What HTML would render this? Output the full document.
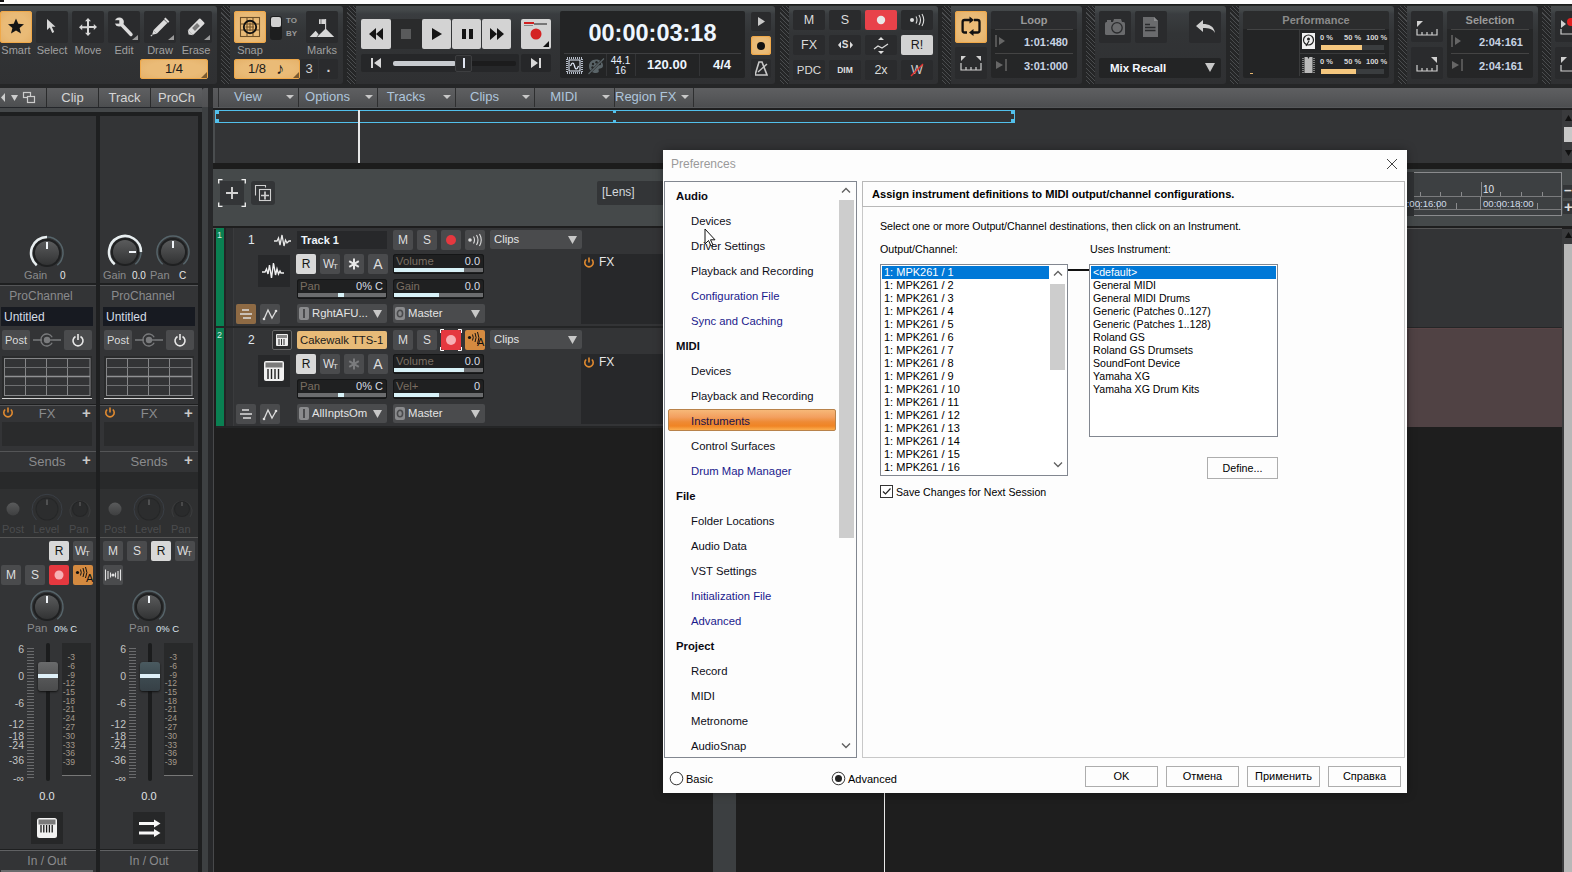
<!DOCTYPE html><html><head><meta charset="utf-8"><style>*{margin:0;padding:0;box-sizing:border-box}html,body{width:1572px;height:872px;overflow:hidden;background:#1e1e1e;font-family:"Liberation Sans",sans-serif}.a{position:absolute}.t{white-space:nowrap}</style></head><body>
<div class="a" style="left:0px;top:0px;width:1572px;height:4px;background:#fcfcfc"></div>
<div class="a" style="left:0px;top:0px;width:4px;height:2px;background:#111"></div>
<div class="a" style="left:0px;top:4px;width:1572px;height:1px;background:#1a1c1b"></div>
<div class="a" style="left:0px;top:5px;width:1572px;height:1px;background:#262827"></div>
<div class="a" style="left:0px;top:6px;width:1572px;height:82px;background:#252627"></div>
<div class="a" style="left:-4px;top:6px;width:221px;height:78px;background:linear-gradient(#474b4c 0px,#44484a 4px,#3a3d40 8px,#323436 28px,#2f3032 78px);border-radius:3px;"></div>
<div class="a" style="left:0px;top:11px;width:32px;height:32px;background:radial-gradient(ellipse at center,#eabb77 55%,#e4b068 100%);border-radius:3px;box-shadow:inset 0 0 0 1px #f0a848;"></div>
<div class="a t" style="left:-4px;top:44px;width:40px;text-align:center;color:#a0a0a0;font-size:11px;line-height:13px">Smart</div>
<div class="a" style="left:36px;top:11px;width:32px;height:32px;background:#2a2b2d;border-radius:2px;"></div>
<div class="a t" style="left:32px;top:44px;width:40px;text-align:center;color:#a0a0a0;font-size:11px;line-height:13px">Select</div>
<div class="a" style="left:72px;top:11px;width:32px;height:32px;background:#2a2b2d;border-radius:2px;"></div>
<div class="a t" style="left:68px;top:44px;width:40px;text-align:center;color:#a0a0a0;font-size:11px;line-height:13px">Move</div>
<div class="a" style="left:108px;top:11px;width:32px;height:32px;background:#2a2b2d;border-radius:2px;"></div>
<div class="a t" style="left:104px;top:44px;width:40px;text-align:center;color:#a0a0a0;font-size:11px;line-height:13px">Edit</div>
<div class="a" style="left:144px;top:11px;width:32px;height:32px;background:#2a2b2d;border-radius:2px;"></div>
<div class="a t" style="left:140px;top:44px;width:40px;text-align:center;color:#a0a0a0;font-size:11px;line-height:13px">Draw</div>
<div class="a" style="left:180px;top:11px;width:32px;height:32px;background:#2a2b2d;border-radius:2px;"></div>
<div class="a t" style="left:176px;top:44px;width:40px;text-align:center;color:#a0a0a0;font-size:11px;line-height:13px">Erase</div>
<svg class="a" style="left:7px;top:17px;" width="18" height="18" viewBox="0 0 18 18"><path d="M9 1.5l2.3 5.3 5.7.4-4.4 3.7 1.4 5.6L9 13.5l-5 3 1.4-5.6L1 7.2l5.7-.4z" fill="#151515"/></svg>
<svg class="a" style="left:44px;top:18px;" width="14" height="17" viewBox="0 0 14 17"><path d="M3 1v11l2.8-2.6 2.4 5.6 2-0.9-2.4-5.4H11.5z" fill="#d8d8d8"/></svg>
<svg class="a" style="left:78px;top:17px;" width="20" height="19" viewBox="0 0 20 19"><path d="M10 1l3 3.2h-2v4.8h4.8v-2l3.2 3-3.2 3v-2H11v4.8h2l-3 3.2-3-3.2h2V11.2H4.2v2L1 10.2l3.2-3v2H9V4.2H7z" fill="#d8d8d8"/></svg>
<svg class="a" style="left:108px;top:11px;" width="32" height="32" viewBox="0 0 32 32"><path d="M13.5 13.5L23 23.5" stroke="#dcdcdc" stroke-width="3.4" stroke-linecap="round"/><circle cx="11.3" cy="11" r="4.6" fill="#dcdcdc"/><path d="M5 9.2h6.3v3.4H5z" fill="#2a2b2d"/></svg>
<svg class="a" style="left:144px;top:11px;" width="32" height="32" viewBox="0 0 32 32"><g transform="rotate(-45 16 16)"><rect x="9" y="13.6" width="15" height="4.8" fill="#dcdcdc"/><path d="M9 13.6L5 16l4 2.4z" fill="#dcdcdc"/><path d="M3 16h2" stroke="#dcdcdc" stroke-width="1"/><path d="M24.5 13.2h2v5.6h-2z" fill="#dcdcdc"/></g></svg>
<svg class="a" style="left:180px;top:11px;" width="32" height="32" viewBox="0 0 32 32"><g transform="rotate(-45 16 16)"><rect x="8" y="12.4" width="17" height="7.2" rx="1" fill="#dcdcdc"/><rect x="12.5" y="14" width="7" height="4" fill="#7a7a7a"/><path d="M8 12.4L5.5 16 8 19.6z" fill="#dcdcdc"/></g></svg>
<svg class="a" style="left:132px;top:35px;" width="6" height="5" viewBox="0 0 6 5"><path d="M6 0V5H0Z" fill="#9a9a9a"/></svg>
<svg class="a" style="left:168px;top:35px;" width="6" height="5" viewBox="0 0 6 5"><path d="M6 0V5H0Z" fill="#9a9a9a"/></svg>
<svg class="a" style="left:204px;top:35px;" width="6" height="5" viewBox="0 0 6 5"><path d="M6 0V5H0Z" fill="#9a9a9a"/></svg>
<div class="a" style="left:140px;top:59px;width:68px;height:20px;background:radial-gradient(ellipse at center,#eabb77 55%,#e4b068 100%);border-radius:3px;box-shadow:inset 0 0 0 1px #f0a848;"></div>
<div class="a t" style="left:140px;top:62px;width:68px;text-align:center;color:#1a1a1a;font-size:13px;line-height:14px">1/4</div>
<svg class="a" style="left:201px;top:72px;" width="6" height="6" viewBox="0 0 6 6"><path d="M6 0V6H0Z" fill="#7a5a30"/></svg>
<div class="a" style="left:221px;top:6px;width:122px;height:78px;background:linear-gradient(#474b4c 0px,#44484a 4px,#3a3d40 8px,#323436 28px,#2f3032 78px);border-radius:3px;"></div>
<div class="a" style="left:221px;top:6px;width:9px;height:78px;background:repeating-linear-gradient(45deg,#252627 0 2.2px,#4a4c4e 2.2px 3.0px)"></div>
<div class="a" style="left:234px;top:11px;width:32px;height:32px;background:radial-gradient(ellipse at center,#eabb77 55%,#e4b068 100%);border-radius:3px;box-shadow:inset 0 0 0 1px #f0a848;"></div>
<svg class="a" style="left:239px;top:16px;" width="22" height="22" viewBox="0 0 22 22"><g stroke="#6e5028" stroke-width="1.1" fill="none"><rect x="1.5" y="1.5" width="19" height="19"/><path d="M1.5 8H20.5M1.5 14H20.5M8 1.5V20.5M14 1.5V20.5"/><path d="M6.5 11H15M11 6.5V15" /></g><circle cx="11" cy="11" r="6.2" stroke="#111" stroke-width="1.9" fill="none"/></svg>
<div class="a" style="left:270px;top:16px;width:12px;height:24px;background:#1d1e1f;border-radius:3px"></div>
<div class="a" style="left:271px;top:17px;width:10px;height:10px;background:#d0d0d0;border-radius:2px"></div>
<div class="a t" style="left:286px;top:16px;color:#9a9a9a;font-size:8px;line-height:9px;font-weight:bold">TO</div>
<div class="a t" style="left:286px;top:29px;color:#9a9a9a;font-size:8px;line-height:9px;font-weight:bold">BY</div>
<div class="a" style="left:306px;top:11px;width:32px;height:32px;background:#2a2b2d;border-radius:2px;"></div>
<svg class="a" style="left:306px;top:11px;" width="32" height="32" viewBox="0 0 32 32"><path d="M3.7 26L9.6 19.7 12.6 23.2 10.6 26z" fill="#d8d8d8"/><path d="M11 26L19.6 17.6 28.2 26z" fill="#d8d8d8"/><path d="M19.6 8v10" stroke="#d8d8d8" stroke-width="1.1"/><path d="M13 8.2h6.1v4.8H13z" fill="#d8d8d8"/><path d="M15 8.2v4.8" stroke="#2a2b2d" stroke-width="0.6"/></svg>
<div class="a t" style="left:230px;top:44px;width:40px;text-align:center;color:#a0a0a0;font-size:11px;line-height:13px">Snap</div>
<div class="a t" style="left:302px;top:44px;width:40px;text-align:center;color:#a0a0a0;font-size:11px;line-height:13px">Marks</div>
<div class="a" style="left:234px;top:59px;width:66px;height:20px;background:radial-gradient(ellipse at center,#eabb77 55%,#e4b068 100%);border-radius:3px;box-shadow:inset 0 0 0 1px #f0a848;"></div>
<div class="a t" style="left:234px;top:62px;width:46px;text-align:center;color:#1a1a1a;font-size:13px;line-height:14px">1/8</div>
<div class="a t" style="left:276px;top:60px;color:#1a1a1a;font-size:16px;line-height:17px">&#9834;</div>
<svg class="a" style="left:293px;top:72px;" width="6" height="6" viewBox="0 0 6 6"><path d="M6 0V6H0Z" fill="#7a5a30"/></svg>
<div class="a" style="left:300px;top:59px;width:18px;height:20px;background:#2a2b2d;border-radius:2px;"></div>
<div class="a" style="left:319px;top:59px;width:19px;height:20px;background:#2a2b2d;border-radius:2px;"></div>
<div class="a t" style="left:300px;top:62px;width:18px;text-align:center;color:#d0d0d0;font-size:13px;line-height:14px">3</div>
<div class="a t" style="left:319px;top:60px;width:19px;text-align:center;color:#d0d0d0;font-size:14px;line-height:15px;font-weight:bold">.</div>
<div class="a" style="left:347px;top:6px;width:428px;height:78px;background:linear-gradient(#474b4c 0px,#44484a 4px,#3a3d40 8px,#323436 28px,#2f3032 78px);border-radius:3px;"></div>
<div class="a" style="left:347px;top:6px;width:9px;height:78px;background:repeating-linear-gradient(45deg,#252627 0 2.2px,#4a4c4e 2.2px 3.0px)"></div>
<div class="a" style="left:361px;top:19px;width:30px;height:30px;background:#d3d3d3;border-radius:2px;"></div>
<div class="a" style="left:391px;top:19px;width:31px;height:30px;background:#2a2b2c"></div>
<div class="a" style="left:422px;top:19px;width:29px;height:30px;background:#d3d3d3;border-radius:2px;"></div>
<div class="a" style="left:452px;top:19px;width:29px;height:30px;background:#d3d3d3;border-radius:2px;"></div>
<div class="a" style="left:482px;top:19px;width:29px;height:30px;background:#d3d3d3;border-radius:2px;"></div>
<svg class="a" style="left:368px;top:26px;" width="16" height="16" viewBox="0 0 16 16"><path d="M1 8l7-6v12zM8 8l7-6v12z" fill="#151515"/></svg>
<div class="a" style="left:401px;top:29px;width:10px;height:10px;background:#595a5b"></div>
<svg class="a" style="left:430px;top:26px;" width="14" height="16" viewBox="0 0 14 16"><path d="M2 2l10 6-10 6z" fill="#151515"/></svg>
<div class="a" style="left:462px;top:29px;width:4px;height:10px;background:#151515"></div>
<div class="a" style="left:469px;top:29px;width:4px;height:10px;background:#151515"></div>
<svg class="a" style="left:489px;top:26px;" width="16" height="16" viewBox="0 0 16 16"><path d="M1 2l7 6-7 6zM8 2l7 6-7 6z" fill="#151515"/></svg>
<div class="a" style="left:521px;top:19px;width:30px;height:30px;background:#d3d3d3;border-radius:2px;"></div>
<div class="a" style="left:524px;top:22px;width:10px;height:2px;background:#d02020"></div>
<div class="a" style="left:534px;top:23px;width:13px;height:1.5px;background:#777"></div>
<svg class="a" style="left:524px;top:24px;" width="10" height="3" viewBox="0 0 10 3"><path d="M0 1l1 1 1-1 1 1 1-1 1 1 1-1 1 1 1-1 1 1" stroke="#666" stroke-width="0.7" fill="none"/></svg>
<svg class="a" style="left:529px;top:27px;" width="14" height="14" viewBox="0 0 14 14"><circle cx="7" cy="7" r="5.5" fill="#d42222"/></svg>
<svg class="a" style="left:543px;top:41px;" width="6" height="6" viewBox="0 0 6 6"><path d="M6 0V6H0Z" fill="#111"/></svg>
<div class="a" style="left:361px;top:54px;width:158px;height:18px;background:#262729;border-radius:2px"></div>
<svg class="a" style="left:370px;top:57px;" width="12" height="12" viewBox="0 0 12 12"><path d="M1 1h2v10H1zM4 6l7-5v10z" fill="#d8d8d8"/></svg>
<div class="a" style="left:393px;top:61px;width:123px;height:5px;background:#1c1c1d;border-radius:2px"></div>
<div class="a" style="left:393px;top:61px;width:63px;height:5px;background:#c8cbd0;border-radius:2px"></div>
<div class="a" style="left:455px;top:55px;width:17px;height:17px;background:#2a2b2d;border:1px solid #3d3e40;border-radius:2px"></div>
<div class="a" style="left:463px;top:58px;width:2px;height:10px;background:#e0e4f0"></div>
<div class="a" style="left:521px;top:54px;width:30px;height:18px;background:#262729;border-radius:2px"></div>
<svg class="a" style="left:530px;top:57px;" width="12" height="12" viewBox="0 0 12 12"><path d="M11 1H9v10h2zM8 6L1 1v10z" fill="#d8d8d8"/></svg>
<div class="a" style="left:560px;top:11px;width:185px;height:67px;background:#232425;border-radius:2px"></div>
<div class="a t" style="left:560px;top:20px;width:185px;text-align:center;color:#eef6ff;font-size:23.5px;line-height:27px;font-weight:bold">00:00:03:18</div>
<div class="a" style="left:564px;top:53px;width:177px;height:1px;background:#3e3f41"></div>
<div class="a" style="left:606px;top:54px;width:1px;height:22px;background:#333436"></div>
<div class="a" style="left:635px;top:54px;width:1px;height:22px;background:#333436"></div>
<div class="a" style="left:699px;top:54px;width:1px;height:22px;background:#333436"></div>
<svg class="a" style="left:566px;top:57px;" width="17" height="17" viewBox="0 0 17 17"><rect x="1" y="1" width="15" height="15" fill="none" stroke="#e8f0ff" stroke-width="1.5" stroke-dasharray="1 1"/><rect x="3" y="3" width="11" height="11" fill="none" stroke="#e8f0ff" stroke-width="1"/><path d="M4.5 9c1.5-4 3-4 4 0s2.5 4 4 0" stroke="#e8f0ff" fill="none" stroke-width="1.2"/></svg>
<svg class="a" style="left:587px;top:57px;" width="18" height="18" viewBox="0 0 18 18"><path d="M9 2.5c4 0 7 2.6 7 6 0 2.2-1.6 3-3 3-1.2 0-1.8.8-1.3 2 .6 1.4-.6 2.5-2.7 2.5-4 0-7-2.9-7-6.8S5 2.5 9 2.5z" fill="#5a6468"/><circle cx="6" cy="7" r="1.2" fill="#232425"/><circle cx="9.5" cy="5.3" r="1.2" fill="#232425"/><circle cx="12.8" cy="7" r="1.2" fill="#232425"/><circle cx="5.5" cy="10.5" r="1.2" fill="#232425"/><path d="M1.5 17L17 1.5" stroke="#232425" stroke-width="2.2"/><path d="M1.5 17L17 1.5" stroke="#5a6468" stroke-width="1.2"/></svg>
<div class="a t" style="left:606px;top:56px;width:29px;text-align:center;color:#e8f0ff;font-size:10px;line-height:10px">44.1</div>
<div class="a t" style="left:606px;top:66px;width:29px;text-align:center;color:#e8f0ff;font-size:10px;line-height:10px">16</div>
<div class="a t" style="left:635px;top:58px;width:64px;text-align:center;color:#eef6ff;font-size:13px;line-height:14px;font-weight:bold">120.00</div>
<div class="a t" style="left:699px;top:58px;width:46px;text-align:center;color:#eef6ff;font-size:13px;line-height:14px;font-weight:bold">4/4</div>
<div class="a" style="left:751px;top:12px;width:20px;height:19px;background:#2a2b2d;border-radius:2px;"></div>
<div class="a" style="left:751px;top:36px;width:20px;height:19px;background:radial-gradient(ellipse at center,#eabb77 55%,#e4b068 100%);border-radius:3px;box-shadow:inset 0 0 0 1px #f0a848;"></div>
<div class="a" style="left:751px;top:59px;width:20px;height:19px;background:#2a2b2d;border-radius:2px;"></div>
<svg class="a" style="left:757px;top:17px;" width="8" height="9" viewBox="0 0 8 9"><path d="M1 0l7 4.5L1 9z" fill="#c8c8c8"/></svg>
<svg class="a" style="left:756px;top:41px;" width="10" height="10" viewBox="0 0 10 10"><circle cx="5" cy="5" r="4" fill="#111"/></svg>
<svg class="a" style="left:755px;top:61px;" width="13" height="15" viewBox="0 0 13 15"><path d="M4 1h3l5 13H0z" fill="none" stroke="#c8c8c8" stroke-width="1.6"/><path d="M3 11L12 3" stroke="#c8c8c8" stroke-width="1.4"/></svg>
<div class="a" style="left:780px;top:6px;width:158px;height:78px;background:linear-gradient(#474b4c 0px,#44484a 4px,#3a3d40 8px,#323436 28px,#2f3032 78px);border-radius:3px;"></div>
<div class="a" style="left:780px;top:6px;width:9px;height:78px;background:repeating-linear-gradient(45deg,#252627 0 2.2px,#4a4c4e 2.2px 3.0px)"></div>
<div class="a" style="left:793px;top:10px;width:32px;height:20px;background:#2a2b2d;border-radius:2px;"></div>
<div class="a t" style="left:793px;top:13px;width:32px;text-align:center;color:#dcdcdc;font-size:12.5px;line-height:14px">M</div>
<div class="a" style="left:829px;top:10px;width:32px;height:20px;background:#2a2b2d;border-radius:2px;"></div>
<div class="a t" style="left:829px;top:13px;width:32px;text-align:center;color:#dcdcdc;font-size:12.5px;line-height:14px">S</div>
<div class="a" style="left:865px;top:10px;width:32px;height:20px;background:#e8424a;border-radius:2px"></div>
<svg class="a" style="left:876px;top:15px;" width="10" height="10" viewBox="0 0 10 10"><circle cx="5" cy="5" r="4.2" fill="#e8e8e8"/></svg>
<div class="a" style="left:901px;top:10px;width:32px;height:20px;background:#2a2b2d;border-radius:2px;"></div>
<svg class="a" style="left:909px;top:13px;" width="16" height="14" viewBox="0 0 16 14"><circle cx="3" cy="7" r="2" fill="#ddd"/><path d="M7 3.5q2 3.5 0 7M10 2q3 5 0 10M13 1q3.5 6 0 12" stroke="#ddd" stroke-width="1.1" fill="none"/></svg>
<div class="a" style="left:793px;top:35px;width:32px;height:20px;background:#2a2b2d;border-radius:2px;"></div>
<div class="a t" style="left:793px;top:38px;width:32px;text-align:center;color:#dcdcdc;font-size:12.5px;line-height:14px">FX</div>
<div class="a" style="left:829px;top:35px;width:32px;height:20px;background:#2a2b2d;border-radius:2px;"></div>
<svg class="a" style="left:838px;top:40px;" width="15" height="10" viewBox="0 0 15 10"><path d="M0 5l3-3.5v7zM15 5l-3-3.5v7z" fill="#ddd"/></svg>
<div class="a t" style="left:837px;top:39px;width:16px;text-align:center;color:#ddd;font-size:10px;line-height:12px;font-weight:bold">S</div>
<div class="a" style="left:865px;top:35px;width:32px;height:20px;background:#2a2b2d;border-radius:2px;"></div>
<svg class="a" style="left:873px;top:37px;" width="16" height="17" viewBox="0 0 16 17"><path d="M8 0l3 3H5zM8 17l3-3H5z" fill="#ddd"/><path d="M1 12l4-3 4 2 6-4" stroke="#ddd" stroke-width="1.2" fill="none"/></svg>
<div class="a" style="left:901px;top:35px;width:32px;height:20px;background:#d3d3d3;border-radius:2px;"></div>
<div class="a t" style="left:901px;top:38px;width:32px;text-align:center;color:#1a1a1a;font-size:12.5px;line-height:14px">R!</div>
<div class="a" style="left:793px;top:60px;width:32px;height:20px;background:#2a2b2d;border-radius:2px;"></div>
<div class="a t" style="left:793px;top:63px;width:32px;text-align:center;color:#dcdcdc;font-size:11.5px;line-height:14px">PDC</div>
<div class="a" style="left:829px;top:60px;width:32px;height:20px;background:#2a2b2d;border-radius:2px;"></div>
<div class="a t" style="left:829px;top:64px;width:32px;text-align:center;color:#ddd;font-size:8.5px;line-height:12px;font-weight:bold">DIM</div>
<div class="a" style="left:865px;top:60px;width:32px;height:20px;background:#2a2b2d;border-radius:2px;"></div>
<div class="a t" style="left:865px;top:63px;width:32px;text-align:center;color:#dcdcdc;font-size:12.5px;line-height:14px">2x</div>
<div class="a" style="left:901px;top:60px;width:32px;height:20px;background:#2a2b2d;border-radius:2px;"></div>
<div class="a t" style="left:901px;top:63px;width:32px;text-align:center;color:#cfcfcf;font-size:12.5px;line-height:14px">W</div>
<svg class="a" style="left:910px;top:63px;" width="14" height="14" viewBox="0 0 14 14"><path d="M1 13L13 1" stroke="#e03030" stroke-width="1.5"/></svg>
<div class="a" style="left:942px;top:6px;width:140px;height:78px;background:linear-gradient(#474b4c 0px,#44484a 4px,#3a3d40 8px,#323436 28px,#2f3032 78px);border-radius:3px;"></div>
<div class="a" style="left:942px;top:6px;width:9px;height:78px;background:repeating-linear-gradient(45deg,#252627 0 2.2px,#4a4c4e 2.2px 3.0px)"></div>
<div class="a" style="left:955px;top:11px;width:32px;height:32px;background:radial-gradient(ellipse at center,#eabb77 55%,#e4b068 100%);border-radius:3px;box-shadow:inset 0 0 0 1px #f0a848;"></div>
<svg class="a" style="left:955px;top:11px;" width="32" height="32" viewBox="0 0 32 32"><path d="M12 21.5H9.6q-2 0-2-2V11q0-2 2-2H15" stroke="#111" stroke-width="2.3" fill="none"/><path d="M14.5 5.5L19 9l-4.5 3.5z" fill="#111"/><path d="M19 9h3.5q2 0 2 2v8.5q0 2-2 2H18" stroke="#111" stroke-width="2.3" fill="none"/><path d="M18.5 18L14 21.5l4.5 3.5z" fill="#111"/></svg>
<div class="a" style="left:955px;top:47px;width:32px;height:32px;background:#2a2b2d;border-radius:2px;"></div>
<svg class="a" style="left:960px;top:55px;" width="22" height="16" viewBox="0 0 22 16"><path d="M1 1h5L1 6z M21 1h-5l5 5z" fill="#d0d0d0"/><path d="M1 8v7h20V8M6 12v3M11 12v3M16 12v3" stroke="#d0d0d0" stroke-width="1.2" fill="none"/></svg>
<div class="a" style="left:991px;top:11px;width:86px;height:67px;background:linear-gradient(#2b2c2e 0,#2b2c2e 18px,#252627 18px);border-radius:2px"></div>
<div class="a t" style="left:991px;top:13px;width:86px;text-align:center;color:#9a9a9a;font-size:11px;line-height:14px;font-weight:bold">Loop</div>
<div class="a" style="left:995px;top:29px;width:78px;height:1px;background:#444"></div>
<div class="a" style="left:995px;top:53px;width:78px;height:1px;background:#444"></div>
<svg class="a" style="left:995px;top:35px;" width="12" height="12" viewBox="0 0 12 12"><path d="M1 0v12" stroke="#666" stroke-width="1.5"/><path d="M4 2l6 4-6 4z" fill="#666"/></svg>
<svg class="a" style="left:995px;top:59px;" width="12" height="12" viewBox="0 0 12 12"><path d="M11 0v12" stroke="#666" stroke-width="1.5"/><path d="M1 2l7 4-7 4z" fill="#666"/></svg>
<div class="a t" style="left:1006px;top:35px;width:62px;text-align:right;color:#c8d4e4;font-size:11px;line-height:14px;font-weight:bold">1:01:480</div>
<div class="a t" style="left:1006px;top:59px;width:62px;text-align:right;color:#c8d4e4;font-size:11px;line-height:14px;font-weight:bold">3:01:000</div>
<div class="a" style="left:1086px;top:6px;width:140px;height:78px;background:linear-gradient(#474b4c 0px,#44484a 4px,#3a3d40 8px,#323436 28px,#2f3032 78px);border-radius:3px;"></div>
<div class="a" style="left:1086px;top:6px;width:9px;height:78px;background:repeating-linear-gradient(45deg,#252627 0 2.2px,#4a4c4e 2.2px 3.0px)"></div>
<div class="a" style="left:1099px;top:11px;width:32px;height:32px;background:#2a2b2d;border-radius:2px;"></div>
<div class="a" style="left:1135px;top:11px;width:32px;height:32px;background:#2a2b2d;border-radius:2px;"></div>
<div class="a" style="left:1189px;top:11px;width:32px;height:32px;background:#2a2b2d;border-radius:2px;"></div>
<svg class="a" style="left:1104px;top:18px;" width="22" height="18" viewBox="0 0 22 18"><rect x="1" y="4" width="20" height="13" rx="1.5" fill="#6a6b6d"/><path d="M9 4l1-3h7l1 3z" fill="#6a6b6d"/><rect x="3" y="2" width="4" height="2" fill="#6a6b6d"/><circle cx="13" cy="9.8" r="5.2" fill="#6a6b6d" stroke="#2a2b2d" stroke-width="1.3"/></svg>
<svg class="a" style="left:1142px;top:16px;" width="18" height="22" viewBox="0 0 18 22"><path d="M1 1h11l4 4v16H1z" fill="#6a6b6d"/><path d="M12 1v4h4" fill="#8a8b8d"/><path d="M3 8.5h5M3 11.5h10.5M3 14.5h10.5" stroke="#2a2b2d" stroke-width="1.5"/></svg>
<svg class="a" style="left:1195px;top:19px;" width="22" height="16" viewBox="0 0 22 16"><path d="M1 7l7-6v4c6 0 11 2 12 9-2-4-6-5-12-5v4z" fill="#d0d0d0"/></svg>
<div class="a" style="left:1099px;top:58px;width:122px;height:20px;background:#232425;border-radius:2px"></div>
<div class="a t" style="left:1110px;top:61px;color:#f4f8ff;font-size:11.5px;line-height:14px;font-weight:bold">Mix Recall</div>
<svg class="a" style="left:1205px;top:63px;" width="10" height="9" viewBox="0 0 10 9"><path d="M0 0h10L5 9z" fill="#c8c8c8"/></svg>
<div class="a" style="left:1230px;top:6px;width:164px;height:78px;background:linear-gradient(#474b4c 0px,#44484a 4px,#3a3d40 8px,#323436 28px,#2f3032 78px);border-radius:3px;"></div>
<div class="a" style="left:1230px;top:6px;width:9px;height:78px;background:repeating-linear-gradient(45deg,#252627 0 2.2px,#4a4c4e 2.2px 3.0px)"></div>
<div class="a" style="left:1243px;top:11px;width:146px;height:67px;background:linear-gradient(#2b2c2d 0,#2b2c2d 18px,#232425 18px);border-radius:2px"></div>
<div class="a t" style="left:1243px;top:13px;width:146px;text-align:center;color:#8a8a8a;font-size:11px;line-height:14px;font-weight:bold">Performance</div>
<div class="a" style="left:1247px;top:29px;width:138px;height:1px;background:#424344"></div>
<div class="a" style="left:1299px;top:30px;width:1px;height:46px;background:#3a3b3c"></div>
<div class="a" style="left:1300px;top:53px;width:85px;height:1px;background:#3a3b3c"></div>
<div class="a" style="left:1250px;top:73px;width:3px;height:1px;background:#e6b56e"></div>
<div class="a" style="left:1251px;top:41px;width:0px;height:0px;"></div>
<div class="a" style="left:1302px;top:33px;width:13px;height:16px;background:#f0f0f0"></div>
<svg class="a" style="left:1302px;top:33px;" width="13" height="16" viewBox="0 0 13 16"><circle cx="6.5" cy="7" r="5" fill="none" stroke="#222" stroke-width="1.2"/><circle cx="6.5" cy="6" r="1.5" fill="#222"/><path d="M4 13l3-5" stroke="#222" stroke-width="1.2"/></svg>
<svg class="a" style="left:1302px;top:56px;" width="13" height="18" viewBox="0 0 13 18"><path d="M2.5 1h3l1 2 1-2h3v16h-8z" fill="#bbb"/><path d="M1 2v15M12 2v15" stroke="#bbb" stroke-width="1.2" stroke-dasharray="1 1"/></svg>
<div class="a t" style="left:1320px;top:33px;color:#d8d8d8;font-size:7.5px;line-height:9px;font-weight:bold">0 %</div>
<div class="a t" style="left:1344px;top:33px;color:#d8d8d8;font-size:7.5px;line-height:9px;font-weight:bold">50 %</div>
<div class="a t" style="left:1366px;top:33px;color:#d8d8d8;font-size:7.5px;line-height:9px;font-weight:bold">100 %</div>
<div class="a t" style="left:1320px;top:57px;color:#d8d8d8;font-size:7.5px;line-height:9px;font-weight:bold">0 %</div>
<div class="a t" style="left:1344px;top:57px;color:#d8d8d8;font-size:7.5px;line-height:9px;font-weight:bold">50 %</div>
<div class="a t" style="left:1366px;top:57px;color:#d8d8d8;font-size:7.5px;line-height:9px;font-weight:bold">100 %</div>
<div class="a" style="left:1321px;top:45px;width:63px;height:5px;background:#3a3d3f"></div>
<div class="a" style="left:1321px;top:45px;width:41px;height:5px;background:#f5c77e"></div>
<div class="a" style="left:1321px;top:69px;width:63px;height:5px;background:#3a3d3f"></div>
<div class="a" style="left:1321px;top:69px;width:35px;height:5px;background:#f5c77e"></div>
<div class="a" style="left:1398px;top:6px;width:140px;height:78px;background:linear-gradient(#474b4c 0px,#44484a 4px,#3a3d40 8px,#323436 28px,#2f3032 78px);border-radius:3px;"></div>
<div class="a" style="left:1398px;top:6px;width:9px;height:78px;background:repeating-linear-gradient(45deg,#252627 0 2.2px,#4a4c4e 2.2px 3.0px)"></div>
<div class="a" style="left:1411px;top:11px;width:32px;height:31px;background:#2a2b2d;border-radius:2px;"></div>
<div class="a" style="left:1411px;top:47px;width:32px;height:32px;background:#2a2b2d;border-radius:2px;"></div>
<svg class="a" style="left:1416px;top:20px;" width="22" height="16" viewBox="0 0 22 16"><path d="M1 1h6L1 7z" fill="#d0d0d0"/><path d="M1 9v6h20V9M6 12v3M11 12v3M16 12v3" stroke="#d0d0d0" stroke-width="1.2" fill="none"/></svg>
<svg class="a" style="left:1416px;top:56px;" width="22" height="16" viewBox="0 0 22 16"><path d="M21 1h-6l6 6z" fill="#d0d0d0"/><path d="M1 9v6h20V9M6 12v3M11 12v3M16 12v3" stroke="#d0d0d0" stroke-width="1.2" fill="none"/></svg>
<div class="a" style="left:1447px;top:11px;width:86px;height:67px;background:linear-gradient(#2b2c2e 0,#2b2c2e 18px,#252627 18px);border-radius:2px"></div>
<div class="a t" style="left:1447px;top:13px;width:86px;text-align:center;color:#9a9a9a;font-size:11px;line-height:14px;font-weight:bold">Selection</div>
<div class="a" style="left:1451px;top:29px;width:78px;height:1px;background:#444"></div>
<div class="a" style="left:1451px;top:53px;width:78px;height:1px;background:#444"></div>
<svg class="a" style="left:1451px;top:35px;" width="12" height="12" viewBox="0 0 12 12"><path d="M1 0v12" stroke="#666" stroke-width="1.5"/><path d="M4 2l6 4-6 4z" fill="#666"/></svg>
<svg class="a" style="left:1451px;top:59px;" width="12" height="12" viewBox="0 0 12 12"><path d="M11 0v12" stroke="#666" stroke-width="1.5"/><path d="M1 2l7 4-7 4z" fill="#666"/></svg>
<div class="a t" style="left:1461px;top:35px;width:62px;text-align:right;color:#c8d4e4;font-size:11px;line-height:14px;font-weight:bold">2:04:161</div>
<div class="a t" style="left:1461px;top:59px;width:62px;text-align:right;color:#c8d4e4;font-size:11px;line-height:14px;font-weight:bold">2:04:161</div>
<div class="a" style="left:1542px;top:6px;width:58px;height:78px;background:linear-gradient(#474b4c 0px,#44484a 4px,#3a3d40 8px,#323436 28px,#2f3032 78px);border-radius:3px;"></div>
<div class="a" style="left:1542px;top:6px;width:9px;height:78px;background:repeating-linear-gradient(45deg,#252627 0 2.2px,#4a4c4e 2.2px 3.0px)"></div>
<div class="a" style="left:1555px;top:11px;width:32px;height:31px;background:#2a2b2d;border-radius:2px;"></div>
<div class="a" style="left:1555px;top:47px;width:32px;height:32px;background:#2a2b2d;border-radius:2px;"></div>
<svg class="a" style="left:1560px;top:19px;" width="12" height="16" viewBox="0 0 12 16"><path d="M1 1l5 4-5 4z" fill="#d0d0d0"/><path d="M1 10v5h11" stroke="#d0d0d0" stroke-width="1.2" fill="none"/></svg>
<div class="a" style="left:1567px;top:18px;width:5px;height:8px;background:#e02020;border-radius:4px 0 0 4px"></div>
<svg class="a" style="left:1560px;top:56px;" width="12" height="16" viewBox="0 0 12 16"><path d="M1 1h6L1 7z" fill="#d0d0d0"/><path d="M1 9v6h11" stroke="#d0d0d0" stroke-width="1.2" fill="none"/></svg>
<div class="a" style="left:0px;top:84px;width:1572px;height:4px;background:#252627"></div>
<div class="a" style="left:0px;top:88px;width:213px;height:27px;background:#2a2b2c"></div>
<div class="a" style="left:0px;top:88px;width:202px;height:19px;background:linear-gradient(#5e5f61,#58595b 40%,#4c4e50);"></div>
<div class="a" style="left:46px;top:88px;width:1px;height:19px;background:#2a2b2c"></div>
<div class="a" style="left:98px;top:88px;width:1px;height:19px;background:#2a2b2c"></div>
<div class="a" style="left:150px;top:88px;width:1px;height:19px;background:#2a2b2c"></div>
<div class="a" style="left:0px;top:107px;width:202px;height:1px;background:#24262a"></div>
<div class="a" style="left:0px;top:108px;width:202px;height:4px;background:#45484a"></div>
<div class="a" style="left:0px;top:112px;width:202px;height:3px;background:#1e1f20"></div>
<svg class="a" style="left:0px;top:91px;" width="60" height="14" viewBox="0 0 60 14"><path d="M5 2v9L1 6.5z" fill="#ccc"/><path d="M11 4h7l-3.5 6z" fill="#ccc"/><rect x="23.5" y="1.5" width="7" height="5" fill="none" stroke="#ccc" stroke-width="1.2"/><rect x="27.5" y="5.5" width="7" height="6" fill="#58595b" stroke="#ccc" stroke-width="1.2"/></svg>
<div class="a t" style="left:47px;top:91px;width:51px;text-align:center;color:#d6d6d6;font-size:13px;line-height:14px">Clip</div>
<div class="a t" style="left:99px;top:91px;width:51px;text-align:center;color:#d6d6d6;font-size:13px;line-height:14px">Track</div>
<div class="a t" style="left:151px;top:91px;width:51px;text-align:center;color:#d6d6d6;font-size:13px;line-height:14px">ProCh</div>
<div class="a" style="left:202px;top:88px;width:6px;height:19px;background:linear-gradient(#5a5b5d,#505153);border-radius:3px 0 0 0"></div>
<div class="a" style="left:202px;top:107px;width:6px;height:8px;background:#3d4042"></div>
<div class="a" style="left:213px;top:88px;width:1359px;height:19px;background:linear-gradient(#5e5f61,#58595b 40%,#4c4e50);"></div>
<div class="a" style="left:213px;top:107px;width:1359px;height:1px;background:#555759"></div>
<div class="a" style="left:213px;top:108px;width:1359px;height:1px;background:#1e1f20"></div>
<div class="a" style="left:218px;top:88px;width:1px;height:19px;background:#2e2f30"></div>
<div class="a" style="left:298px;top:88px;width:1px;height:19px;background:#2e2f30"></div>
<div class="a" style="left:377px;top:88px;width:1px;height:19px;background:#2e2f30"></div>
<div class="a" style="left:455px;top:88px;width:1px;height:19px;background:#2e2f30"></div>
<div class="a" style="left:534px;top:88px;width:1px;height:19px;background:#2e2f30"></div>
<div class="a" style="left:614px;top:88px;width:1px;height:19px;background:#2e2f30"></div>
<div class="a" style="left:693px;top:88px;width:1px;height:19px;background:#2e2f30"></div>
<div class="a" style="left:213px;top:88px;width:5px;height:19px;background:linear-gradient(#5a5b5d,#505153);border-radius:3px 0 0 0"></div>
<div class="a t" style="left:219px;top:90px;width:58px;text-align:center;color:#afc6dc;font-size:13px;line-height:14px">View</div>
<svg class="a" style="left:286px;top:95px;" width="8" height="5" viewBox="0 0 8 5"><path d="M0 0h8L4 4z" fill="#c8c8c8"/></svg>
<div class="a t" style="left:299px;top:90px;width:57px;text-align:center;color:#afc6dc;font-size:13px;line-height:14px">Options</div>
<svg class="a" style="left:365px;top:95px;" width="8" height="5" viewBox="0 0 8 5"><path d="M0 0h8L4 4z" fill="#c8c8c8"/></svg>
<div class="a t" style="left:378px;top:90px;width:56px;text-align:center;color:#afc6dc;font-size:13px;line-height:14px">Tracks</div>
<svg class="a" style="left:443px;top:95px;" width="8" height="5" viewBox="0 0 8 5"><path d="M0 0h8L4 4z" fill="#c8c8c8"/></svg>
<div class="a t" style="left:456px;top:90px;width:57px;text-align:center;color:#afc6dc;font-size:13px;line-height:14px">Clips</div>
<svg class="a" style="left:522px;top:95px;" width="8" height="5" viewBox="0 0 8 5"><path d="M0 0h8L4 4z" fill="#c8c8c8"/></svg>
<div class="a t" style="left:535px;top:90px;width:58px;text-align:center;color:#afc6dc;font-size:13px;line-height:14px">MIDI</div>
<svg class="a" style="left:602px;top:95px;" width="8" height="5" viewBox="0 0 8 5"><path d="M0 0h8L4 4z" fill="#c8c8c8"/></svg>
<div class="a t" style="left:615px;top:90px;width:57px;text-align:center;color:#afc6dc;font-size:13px;line-height:14px">Region FX</div>
<svg class="a" style="left:681px;top:95px;" width="8" height="5" viewBox="0 0 8 5"><path d="M0 0h8L4 4z" fill="#c8c8c8"/></svg>
<div class="a" style="left:0px;top:115px;width:213px;height:757px;background:#1e1f20"></div>
<div class="a" style="left:0px;top:116px;width:96px;height:167px;background:#333436"></div>
<div class="a" style="left:0px;top:283px;width:96px;height:2px;background:#1e1f20"></div>
<div class="a" style="left:0px;top:285px;width:96px;height:1px;background:#545557"></div>
<div class="a" style="left:0px;top:286px;width:96px;height:119px;background:#333436"></div>
<svg class="a" style="left:29px;top:235px;" width="36" height="36" viewBox="0 0 36 36"><path d="M7.72 30.26 A16 16 0 1 1 28.28 30.26" stroke="#56646a" stroke-width="1.5" fill="none"/><path d="M7.72 30.26 A16 16 0 0 1 18.00 2.00" stroke="#e8eef0" stroke-width="2.5" fill="none"/><circle cx="18" cy="18" r="14" fill="#1f2021"/><defs><linearGradient id="kg47253" x1="0" y1="0" x2="0" y2="1"><stop offset="0" stop-color="#5a5b5c"/><stop offset="1" stop-color="#323334"/></linearGradient></defs><circle cx="18" cy="18" r="12" fill="url(#kg47253)"/><path d="M18.00 7.00L18.00 14.00" stroke="#f0f4f8" stroke-width="2"/></svg>
<div class="a t" style="left:24px;top:269px;color:#8a8b8d;font-size:11px;line-height:13px">Gain</div>
<div class="a t" style="left:60px;top:270px;color:#e6e6e6;font-size:10px;line-height:12px">0</div>
<div class="a t" style="left:0px;top:289px;width:82px;text-align:center;color:#8a8b8d;font-size:12px;line-height:14px">ProChannel</div>
<div class="a" style="left:1px;top:307px;width:92px;height:19px;background:#171a21"></div>
<div class="a t" style="left:4px;top:310px;color:#d6dde6;font-size:12px;line-height:14px">Untitled</div>
<div class="a" style="left:2px;top:330px;width:28px;height:20px;background:#4a4b4d;border-radius:2px"></div>
<div class="a t" style="left:2px;top:333px;width:28px;text-align:center;color:#dcdcdc;font-size:11px;line-height:14px">Post</div>
<svg class="a" style="left:33px;top:333px;" width="28" height="14" viewBox="0 0 28 14"><path d="M0 7h9M20 7h8" stroke="#7a7b7d" stroke-width="1.4"/><path d="M19.2 4.3A6 6 0 1 0 19.2 9.7" stroke="#7a7b7d" stroke-width="1.3" fill="none"/><circle cx="14" cy="7" r="3.2" fill="#7a7b7d"/><path d="M14 7h6" stroke="#7a7b7d" stroke-width="1.4"/></svg>
<div class="a" style="left:64px;top:330px;width:28px;height:20px;background:#4a4b4d;border-radius:2px"></div>
<svg class="a" style="left:71px;top:333px;" width="14" height="14" viewBox="0 0 14 14"><path d="M4.5 3.5A5 5 0 1 0 9.5 3.5" stroke="#e8e8e8" stroke-width="1.6" fill="none"/><path d="M7 1v6" stroke="#e8e8e8" stroke-width="1.6"/></svg>
<svg class="a" style="left:2px;top:356px;" width="90" height="42" viewBox="0 0 90 42"><rect x="0" y="0" width="90" height="42" fill="#2a2b2c"/><rect x="2.5" y="2.5" width="85.5" height="37" fill="#333436" stroke="#858688" stroke-width="1"/><path d="M23.5 2.5V39.5" stroke="#858688" stroke-width="1"/><path d="M44.5 2.5V39.5" stroke="#858688" stroke-width="1"/><path d="M65.5 2.5V39.5" stroke="#858688" stroke-width="1"/><path d="M2.5 11.5H88" stroke="#6e6f71" stroke-width="1"/><path d="M2.5 29.5H88" stroke="#6e6f71" stroke-width="1"/><path d="M2.5 20.5H88" stroke="#909193" stroke-width="1.6"/></svg>
<div class="a" style="left:2px;top:398px;width:90px;height:1px;background:#cfcfcf"></div>
<div class="a" style="left:0px;top:404px;width:96px;height:1px;background:#1e1f20"></div>
<div class="a" style="left:0px;top:405px;width:96px;height:1px;background:#545557"></div>
<div class="a" style="left:0px;top:406px;width:96px;height:45px;background:#333436"></div>
<svg class="a" style="left:2px;top:406px;" width="12" height="13" viewBox="0 0 12 13"><path d="M3.2 3.5A4.2 4.2 0 1 0 8.8 3.5" stroke="#e08a30" stroke-width="1.6" fill="none"/><path d="M6 1.5v5" stroke="#e08a30" stroke-width="1.6"/></svg>
<div class="a t" style="left:0px;top:407px;width:94px;text-align:center;color:#8a8b8d;font-size:13px;line-height:14px">FX</div>
<div class="a t" style="left:82px;top:405px;color:#c8c8c8;font-size:15px;line-height:15px;font-weight:bold">+</div>
<div class="a" style="left:2px;top:422px;width:90px;height:24px;background:#2a2b2c"></div>
<div class="a" style="left:0px;top:451px;width:96px;height:1px;background:#545557"></div>
<div class="a" style="left:0px;top:452px;width:96px;height:20px;background:#333436"></div>
<div class="a t" style="left:0px;top:455px;width:94px;text-align:center;color:#8a8b8d;font-size:13px;line-height:14px">Sends</div>
<div class="a t" style="left:82px;top:452px;color:#c8c8c8;font-size:15px;line-height:15px;font-weight:bold">+</div>
<div class="a" style="left:0px;top:472px;width:96px;height:17px;background:#28292a"></div>
<div class="a" style="left:0px;top:489px;width:96px;height:48px;background:#2f3031"></div>
<svg class="a" style="left:6px;top:502px;" width="14" height="14" viewBox="0 0 14 14"><defs><linearGradient id="pg0" x1="0" y1="0" x2="0" y2="1"><stop offset="0" stop-color="#5a5b5c"/><stop offset="1" stop-color="#3e3f40"/></linearGradient></defs><circle cx="7" cy="7" r="6.5" fill="url(#pg0)"/></svg>
<svg class="a" style="left:31px;top:493px;" width="32" height="32" viewBox="0 0 32 32"><path d="M5.5 27A15 15 0 1 1 26.5 27" stroke="#3a3f46" stroke-width="1" fill="none"/><circle cx="16" cy="16" r="11.5" fill="#262728"/><circle cx="16" cy="16" r="10.5" fill="#2c2d2e"/><path d="M16 6.5v5.5" stroke="#5a5b5c" stroke-width="1.6"/></svg>
<svg class="a" style="left:68px;top:497px;" width="24" height="24" viewBox="0 0 24 24"><path d="M4 20A10 10 0 1 1 20 20" stroke="#3a3b3c" stroke-width="1.2" fill="none"/><circle cx="12" cy="12" r="8" fill="#252627"/><circle cx="12" cy="12" r="7" fill="#2a2b2c"/><path d="M12 5v4" stroke="#555" stroke-width="1.5"/></svg>
<div class="a t" style="left:2px;top:523px;color:#4b4c4e;font-size:11px;line-height:13px">Post</div>
<div class="a t" style="left:33px;top:523px;color:#4b4c4e;font-size:11px;line-height:13px">Level</div>
<div class="a t" style="left:69px;top:523px;color:#4b4c4e;font-size:11px;line-height:13px">Pan</div>
<div class="a" style="left:0px;top:537px;width:96px;height:1px;background:#555"></div>
<div class="a" style="left:0px;top:538px;width:96px;height:334px;background:#333436"></div>
<div class="a" style="left:49px;top:541px;width:20px;height:20px;background:#d8d8d8;border-radius:2px"></div>
<div class="a t" style="left:49px;top:544px;width:20px;text-align:center;color:#151515;font-size:12px;line-height:14px">R</div>
<div class="a" style="left:73px;top:541px;width:20px;height:20px;background:#4a4b4d;border-radius:2px"></div>
<div class="a t" style="left:75px;top:544px;color:#dedede;font-size:12px;line-height:14px">W</div>
<div class="a t" style="left:85px;top:549px;color:#dedede;font-size:8px;line-height:9px">T</div>
<div class="a" style="left:1px;top:565px;width:20px;height:20px;background:#4a4b4d;border-radius:2px"></div>
<div class="a t" style="left:1px;top:568px;width:20px;text-align:center;color:#dedede;font-size:12px;line-height:14px">M</div>
<div class="a" style="left:25px;top:565px;width:20px;height:20px;background:#4a4b4d;border-radius:2px"></div>
<div class="a t" style="left:25px;top:568px;width:20px;text-align:center;color:#dedede;font-size:12px;line-height:14px">S</div>
<div class="a" style="left:49px;top:565px;width:20px;height:20px;background:#e5383f;border-radius:2px"></div>
<div class="a" style="left:73px;top:565px;width:20px;height:20px;background:#d48a40;border-radius:2px"></div>
<svg class="a" style="left:53px;top:569px;" width="12" height="12" viewBox="0 0 12 12"><circle cx="6" cy="6" r="4.5" fill="#f7b0b4"/></svg>
<svg class="a" style="left:74px;top:566px;" width="19" height="18" viewBox="0 0 19 18"><circle cx="3.5" cy="6.5" r="1.6" fill="#111"/><path d="M6.5 3.5q1.5 3 0 6M9 2q2.2 4.5 0 9M11.5 1q2.8 5.5 0 11" stroke="#111" stroke-width="1" fill="none"/></svg>
<div class="a t" style="left:86px;top:573px;color:#111;font-size:11px;line-height:11px">A</div>
<svg class="a" style="left:29px;top:589px;" width="36" height="36" viewBox="0 0 36 36"><path d="M7.72 30.26 A16 16 0 1 1 28.28 30.26" stroke="#56646a" stroke-width="1.5" fill="none"/><circle cx="18" cy="18" r="14" fill="#1f2021"/><defs><linearGradient id="kg47607" x1="0" y1="0" x2="0" y2="1"><stop offset="0" stop-color="#5a5b5c"/><stop offset="1" stop-color="#323334"/></linearGradient></defs><circle cx="18" cy="18" r="12" fill="url(#kg47607)"/><path d="M18.00 7.00L18.00 14.00" stroke="#f0f4f8" stroke-width="2"/></svg>
<div class="a t" style="left:27px;top:622px;color:#8a8b8d;font-size:11.5px;line-height:13px">Pan</div>
<div class="a t" style="left:54px;top:623px;color:#dde6f0;font-size:9.5px;line-height:12px">0% C</div>
<div class="a t" style="left:-2px;top:643px;width:26px;text-align:right;color:#c4c4c4;font-size:10.5px;line-height:12px">6</div>
<div class="a t" style="left:-2px;top:670px;width:26px;text-align:right;color:#c4c4c4;font-size:10.5px;line-height:12px">0</div>
<div class="a t" style="left:-2px;top:697px;width:26px;text-align:right;color:#c4c4c4;font-size:10.5px;line-height:12px">-6</div>
<div class="a t" style="left:-2px;top:718px;width:26px;text-align:right;color:#c4c4c4;font-size:10.5px;line-height:12px">-12</div>
<div class="a t" style="left:-2px;top:730px;width:26px;text-align:right;color:#c4c4c4;font-size:10.5px;line-height:12px">-18</div>
<div class="a t" style="left:-2px;top:739px;width:26px;text-align:right;color:#c4c4c4;font-size:10.5px;line-height:12px">-24</div>
<div class="a t" style="left:-2px;top:754px;width:26px;text-align:right;color:#c4c4c4;font-size:10.5px;line-height:12px">-36</div>
<div class="a t" style="left:-2px;top:772px;width:26px;text-align:right;color:#c4c4c4;font-size:10.5px;line-height:12px">-&#8734;</div>
<svg class="a" style="left:27px;top:648px;" width="7" height="138" viewBox="0 0 7 138"><path d="M0 0.5H7" stroke="#6a6b6d" stroke-width="1"/><path d="M0 3.5H7" stroke="#6a6b6d" stroke-width="1"/><path d="M0 6.5H7" stroke="#6a6b6d" stroke-width="1"/><path d="M0 9.5H7" stroke="#6a6b6d" stroke-width="1"/><path d="M0 12.5H7" stroke="#6a6b6d" stroke-width="1"/><path d="M0 15.5H7" stroke="#6a6b6d" stroke-width="1"/><path d="M0 18.5H7" stroke="#6a6b6d" stroke-width="1"/><path d="M0 21.5H7" stroke="#6a6b6d" stroke-width="1"/><path d="M0 24.5H7" stroke="#6a6b6d" stroke-width="1"/><path d="M0 27.5H7" stroke="#6a6b6d" stroke-width="1"/><path d="M0 30.5H7" stroke="#6a6b6d" stroke-width="1"/><path d="M0 33.5H7" stroke="#6a6b6d" stroke-width="1"/><path d="M0 36.5H7" stroke="#6a6b6d" stroke-width="1"/><path d="M0 39.5H7" stroke="#6a6b6d" stroke-width="1"/><path d="M0 42.5H7" stroke="#6a6b6d" stroke-width="1"/><path d="M0 45.5H7" stroke="#6a6b6d" stroke-width="1"/><path d="M0 48.5H7" stroke="#6a6b6d" stroke-width="1"/><path d="M0 51.5H7" stroke="#6a6b6d" stroke-width="1"/><path d="M0 54.5H7" stroke="#6a6b6d" stroke-width="1"/><path d="M0 57.5H7" stroke="#6a6b6d" stroke-width="1"/><path d="M0 60.5H7" stroke="#6a6b6d" stroke-width="1"/><path d="M0 63.5H7" stroke="#6a6b6d" stroke-width="1"/><path d="M0 66.5H7" stroke="#6a6b6d" stroke-width="1"/><path d="M0 69.5H7" stroke="#6a6b6d" stroke-width="1"/><path d="M0 72.5H7" stroke="#6a6b6d" stroke-width="1"/><path d="M0 75.5H7" stroke="#6a6b6d" stroke-width="1"/><path d="M0 78.5H7" stroke="#6a6b6d" stroke-width="1"/><path d="M0 81.5H7" stroke="#6a6b6d" stroke-width="1"/><path d="M0 84.5H7" stroke="#6a6b6d" stroke-width="1"/><path d="M0 87.5H7" stroke="#6a6b6d" stroke-width="1"/><path d="M0 90.5H7" stroke="#6a6b6d" stroke-width="1"/><path d="M0 93.5H7" stroke="#6a6b6d" stroke-width="1"/><path d="M0 96.5H7" stroke="#6a6b6d" stroke-width="1"/><path d="M0 99.5H7" stroke="#6a6b6d" stroke-width="1"/><path d="M0 102.5H7" stroke="#6a6b6d" stroke-width="1"/><path d="M0 105.5H7" stroke="#6a6b6d" stroke-width="1"/><path d="M0 108.5H7" stroke="#6a6b6d" stroke-width="1"/><path d="M0 111.5H7" stroke="#6a6b6d" stroke-width="1"/><path d="M0 114.5H7" stroke="#6a6b6d" stroke-width="1"/><path d="M0 117.5H7" stroke="#6a6b6d" stroke-width="1"/><path d="M0 120.5H7" stroke="#6a6b6d" stroke-width="1"/><path d="M0 123.5H7" stroke="#6a6b6d" stroke-width="1"/><path d="M0 126.5H7" stroke="#6a6b6d" stroke-width="1"/><path d="M0 129.5H7" stroke="#6a6b6d" stroke-width="1"/></svg>
<div class="a" style="left:46px;top:643px;width:4px;height:138px;background:#1b1c1d;border-radius:2px"></div>
<div class="a" style="left:38px;top:662px;width:20px;height:29px;background:linear-gradient(#6a6b6c,#58595a 45%,#4a4b4c);border-radius:3px;box-shadow:0 1px 2px #111"></div>
<div class="a" style="left:38px;top:674px;width:20px;height:4px;background:#dff0f8"></div>
<div class="a" style="left:62px;top:643px;width:29px;height:133px;background:#28292a"></div>
<div class="a" style="left:62px;top:775px;width:29px;height:1px;background:#777"></div>
<div class="a t" style="left:62px;top:652px;width:13px;text-align:right;color:#a49a8c;font-size:8.5px;line-height:10px">-3</div>
<div class="a t" style="left:62px;top:661px;width:13px;text-align:right;color:#a49a8c;font-size:8.5px;line-height:10px">-6</div>
<div class="a t" style="left:62px;top:670px;width:13px;text-align:right;color:#a49a8c;font-size:8.5px;line-height:10px">-9</div>
<div class="a t" style="left:62px;top:678px;width:13px;text-align:right;color:#a49a8c;font-size:8.5px;line-height:10px">-12</div>
<div class="a t" style="left:62px;top:687px;width:13px;text-align:right;color:#a49a8c;font-size:8.5px;line-height:10px">-15</div>
<div class="a t" style="left:62px;top:696px;width:13px;text-align:right;color:#a49a8c;font-size:8.5px;line-height:10px">-18</div>
<div class="a t" style="left:62px;top:704px;width:13px;text-align:right;color:#a49a8c;font-size:8.5px;line-height:10px">-21</div>
<div class="a t" style="left:62px;top:713px;width:13px;text-align:right;color:#a49a8c;font-size:8.5px;line-height:10px">-24</div>
<div class="a t" style="left:62px;top:722px;width:13px;text-align:right;color:#a49a8c;font-size:8.5px;line-height:10px">-27</div>
<div class="a t" style="left:62px;top:731px;width:13px;text-align:right;color:#a49a8c;font-size:8.5px;line-height:10px">-30</div>
<div class="a t" style="left:62px;top:740px;width:13px;text-align:right;color:#a49a8c;font-size:8.5px;line-height:10px">-33</div>
<div class="a t" style="left:62px;top:748px;width:13px;text-align:right;color:#a49a8c;font-size:8.5px;line-height:10px">-36</div>
<div class="a t" style="left:62px;top:757px;width:13px;text-align:right;color:#a49a8c;font-size:8.5px;line-height:10px">-39</div>
<div class="a t" style="left:27px;top:790px;width:40px;text-align:center;color:#e0e4e8;font-size:11px;line-height:13px">0.0</div>
<div class="a" style="left:31px;top:812px;width:32px;height:32px;background:#262728"></div>
<svg class="a" style="left:36px;top:817px;" width="22" height="22" viewBox="0 0 22 22"><rect x="1" y="1" width="20" height="20" rx="2.5" fill="#f2f2f2"/><rect x="2.5" y="2.5" width="17" height="5" fill="#7a7a7a"/><path d="M5 8v7.5M7.8 8v7.5M10.6 8v7.5M13.4 8v7.5M16.2 8v7.5" stroke="#1a1a1a" stroke-width="1.3"/></svg>
<div class="a" style="left:0px;top:849px;width:96px;height:1px;background:#1e1f20"></div>
<div class="a" style="left:0px;top:850px;width:96px;height:1px;background:#606163"></div>
<div class="a t" style="left:0px;top:854px;width:94px;text-align:center;color:#8a8b8d;font-size:12px;line-height:14px">In / Out</div>
<div class="a" style="left:100px;top:116px;width:98px;height:167px;background:#333436"></div>
<div class="a" style="left:100px;top:283px;width:98px;height:2px;background:#1e1f20"></div>
<div class="a" style="left:100px;top:285px;width:98px;height:1px;background:#545557"></div>
<div class="a" style="left:100px;top:286px;width:98px;height:119px;background:#333436"></div>
<svg class="a" style="left:107px;top:234px;" width="36" height="36" viewBox="0 0 36 36"><path d="M7.72 30.26 A16 16 0 1 1 28.28 30.26" stroke="#56646a" stroke-width="1.5" fill="none"/><path d="M7.72 30.26 A16 16 0 1 1 34.00 18.00" stroke="#e8eef0" stroke-width="2.5" fill="none"/><circle cx="18" cy="18" r="14" fill="#1f2021"/><defs><linearGradient id="kg125252" x1="0" y1="0" x2="0" y2="1"><stop offset="0" stop-color="#5a5b5c"/><stop offset="1" stop-color="#323334"/></linearGradient></defs><circle cx="18" cy="18" r="12" fill="url(#kg125252)"/><path d="M29.00 18.00L22.00 18.00" stroke="#f0f4f8" stroke-width="2"/></svg>
<svg class="a" style="left:155px;top:234px;" width="36" height="36" viewBox="0 0 36 36"><path d="M7.72 30.26 A16 16 0 1 1 28.28 30.26" stroke="#56646a" stroke-width="1.5" fill="none"/><circle cx="18" cy="18" r="14" fill="#1f2021"/><defs><linearGradient id="kg173252" x1="0" y1="0" x2="0" y2="1"><stop offset="0" stop-color="#5a5b5c"/><stop offset="1" stop-color="#323334"/></linearGradient></defs><circle cx="18" cy="18" r="12" fill="url(#kg173252)"/><path d="M18.00 7.00L18.00 14.00" stroke="#f0f4f8" stroke-width="2"/></svg>
<div class="a t" style="left:103px;top:269px;color:#8a8b8d;font-size:11px;line-height:13px">Gain</div>
<div class="a t" style="left:132px;top:270px;color:#e6e6e6;font-size:10px;line-height:12px">0.0</div>
<div class="a t" style="left:150px;top:269px;color:#8a8b8d;font-size:11px;line-height:13px">Pan</div>
<div class="a t" style="left:179px;top:270px;color:#e6e6e6;font-size:10px;line-height:12px">C</div>
<div class="a t" style="left:102px;top:289px;width:82px;text-align:center;color:#8a8b8d;font-size:12px;line-height:14px">ProChannel</div>
<div class="a" style="left:103px;top:307px;width:92px;height:19px;background:#171a21"></div>
<div class="a t" style="left:106px;top:310px;color:#d6dde6;font-size:12px;line-height:14px">Untitled</div>
<div class="a" style="left:104px;top:330px;width:28px;height:20px;background:#4a4b4d;border-radius:2px"></div>
<div class="a t" style="left:104px;top:333px;width:28px;text-align:center;color:#dcdcdc;font-size:11px;line-height:14px">Post</div>
<svg class="a" style="left:135px;top:333px;" width="28" height="14" viewBox="0 0 28 14"><path d="M0 7h9M20 7h8" stroke="#7a7b7d" stroke-width="1.4"/><path d="M19.2 4.3A6 6 0 1 0 19.2 9.7" stroke="#7a7b7d" stroke-width="1.3" fill="none"/><circle cx="14" cy="7" r="3.2" fill="#7a7b7d"/><path d="M14 7h6" stroke="#7a7b7d" stroke-width="1.4"/></svg>
<div class="a" style="left:166px;top:330px;width:28px;height:20px;background:#4a4b4d;border-radius:2px"></div>
<svg class="a" style="left:173px;top:333px;" width="14" height="14" viewBox="0 0 14 14"><path d="M4.5 3.5A5 5 0 1 0 9.5 3.5" stroke="#e8e8e8" stroke-width="1.6" fill="none"/><path d="M7 1v6" stroke="#e8e8e8" stroke-width="1.6"/></svg>
<svg class="a" style="left:104px;top:356px;" width="90" height="42" viewBox="0 0 90 42"><rect x="0" y="0" width="90" height="42" fill="#2a2b2c"/><rect x="2.5" y="2.5" width="85.5" height="37" fill="#333436" stroke="#858688" stroke-width="1"/><path d="M23.5 2.5V39.5" stroke="#858688" stroke-width="1"/><path d="M44.5 2.5V39.5" stroke="#858688" stroke-width="1"/><path d="M65.5 2.5V39.5" stroke="#858688" stroke-width="1"/><path d="M2.5 11.5H88" stroke="#6e6f71" stroke-width="1"/><path d="M2.5 29.5H88" stroke="#6e6f71" stroke-width="1"/><path d="M2.5 20.5H88" stroke="#909193" stroke-width="1.6"/></svg>
<div class="a" style="left:104px;top:398px;width:90px;height:1px;background:#cfcfcf"></div>
<div class="a" style="left:100px;top:404px;width:98px;height:1px;background:#1e1f20"></div>
<div class="a" style="left:100px;top:405px;width:98px;height:1px;background:#545557"></div>
<div class="a" style="left:100px;top:406px;width:98px;height:45px;background:#333436"></div>
<svg class="a" style="left:104px;top:406px;" width="12" height="13" viewBox="0 0 12 13"><path d="M3.2 3.5A4.2 4.2 0 1 0 8.8 3.5" stroke="#e08a30" stroke-width="1.6" fill="none"/><path d="M6 1.5v5" stroke="#e08a30" stroke-width="1.6"/></svg>
<div class="a t" style="left:102px;top:407px;width:94px;text-align:center;color:#8a8b8d;font-size:13px;line-height:14px">FX</div>
<div class="a t" style="left:184px;top:405px;color:#c8c8c8;font-size:15px;line-height:15px;font-weight:bold">+</div>
<div class="a" style="left:104px;top:422px;width:90px;height:24px;background:#2a2b2c"></div>
<div class="a" style="left:100px;top:451px;width:98px;height:1px;background:#545557"></div>
<div class="a" style="left:100px;top:452px;width:98px;height:20px;background:#333436"></div>
<div class="a t" style="left:102px;top:455px;width:94px;text-align:center;color:#8a8b8d;font-size:13px;line-height:14px">Sends</div>
<div class="a t" style="left:184px;top:452px;color:#c8c8c8;font-size:15px;line-height:15px;font-weight:bold">+</div>
<div class="a" style="left:100px;top:472px;width:98px;height:17px;background:#28292a"></div>
<div class="a" style="left:100px;top:489px;width:98px;height:48px;background:#2f3031"></div>
<svg class="a" style="left:108px;top:502px;" width="14" height="14" viewBox="0 0 14 14"><defs><linearGradient id="pg102" x1="0" y1="0" x2="0" y2="1"><stop offset="0" stop-color="#5a5b5c"/><stop offset="1" stop-color="#3e3f40"/></linearGradient></defs><circle cx="7" cy="7" r="6.5" fill="url(#pg102)"/></svg>
<svg class="a" style="left:133px;top:493px;" width="32" height="32" viewBox="0 0 32 32"><path d="M5.5 27A15 15 0 1 1 26.5 27" stroke="#3a3f46" stroke-width="1" fill="none"/><circle cx="16" cy="16" r="11.5" fill="#262728"/><circle cx="16" cy="16" r="10.5" fill="#2c2d2e"/><path d="M16 6.5v5.5" stroke="#5a5b5c" stroke-width="1.6"/></svg>
<svg class="a" style="left:170px;top:497px;" width="24" height="24" viewBox="0 0 24 24"><path d="M4 20A10 10 0 1 1 20 20" stroke="#3a3b3c" stroke-width="1.2" fill="none"/><circle cx="12" cy="12" r="8" fill="#252627"/><circle cx="12" cy="12" r="7" fill="#2a2b2c"/><path d="M12 5v4" stroke="#555" stroke-width="1.5"/></svg>
<div class="a t" style="left:104px;top:523px;color:#4b4c4e;font-size:11px;line-height:13px">Post</div>
<div class="a t" style="left:135px;top:523px;color:#4b4c4e;font-size:11px;line-height:13px">Level</div>
<div class="a t" style="left:171px;top:523px;color:#4b4c4e;font-size:11px;line-height:13px">Pan</div>
<div class="a" style="left:100px;top:537px;width:98px;height:1px;background:#555"></div>
<div class="a" style="left:100px;top:538px;width:98px;height:334px;background:#333436"></div>
<div class="a" style="left:103px;top:541px;width:20px;height:20px;background:#4a4b4d;border-radius:2px"></div>
<div class="a t" style="left:103px;top:544px;width:20px;text-align:center;color:#dedede;font-size:12px;line-height:14px">M</div>
<div class="a" style="left:127px;top:541px;width:20px;height:20px;background:#4a4b4d;border-radius:2px"></div>
<div class="a t" style="left:127px;top:544px;width:20px;text-align:center;color:#dedede;font-size:12px;line-height:14px">S</div>
<div class="a" style="left:151px;top:541px;width:20px;height:20px;background:#d8d8d8;border-radius:2px"></div>
<div class="a t" style="left:151px;top:544px;width:20px;text-align:center;color:#151515;font-size:12px;line-height:14px">R</div>
<div class="a" style="left:175px;top:541px;width:20px;height:20px;background:#4a4b4d;border-radius:2px"></div>
<div class="a t" style="left:177px;top:544px;color:#dedede;font-size:12px;line-height:14px">W</div>
<div class="a t" style="left:187px;top:549px;color:#dedede;font-size:8px;line-height:9px">T</div>
<div class="a" style="left:103px;top:565px;width:20px;height:20px;background:#4a4b4d;border-radius:2px"></div>
<svg class="a" style="left:104px;top:568px;" width="18" height="14" viewBox="0 0 18 14"><path d="M1.5 1.5v11M4 3v8M6.5 4.5v5M16.5 1.5v11M14 3v8M11.5 4.5v5" stroke="#e0e0e0" stroke-width="1.1"/><circle cx="9" cy="7" r="1.6" fill="#e0e0e0"/></svg>
<svg class="a" style="left:131px;top:589px;" width="36" height="36" viewBox="0 0 36 36"><path d="M7.72 30.26 A16 16 0 1 1 28.28 30.26" stroke="#56646a" stroke-width="1.5" fill="none"/><circle cx="18" cy="18" r="14" fill="#1f2021"/><defs><linearGradient id="kg149607" x1="0" y1="0" x2="0" y2="1"><stop offset="0" stop-color="#5a5b5c"/><stop offset="1" stop-color="#323334"/></linearGradient></defs><circle cx="18" cy="18" r="12" fill="url(#kg149607)"/><path d="M18.00 7.00L18.00 14.00" stroke="#f0f4f8" stroke-width="2"/></svg>
<div class="a t" style="left:129px;top:622px;color:#8a8b8d;font-size:11.5px;line-height:13px">Pan</div>
<div class="a t" style="left:156px;top:623px;color:#dde6f0;font-size:9.5px;line-height:12px">0% C</div>
<div class="a t" style="left:100px;top:643px;width:26px;text-align:right;color:#c4c4c4;font-size:10.5px;line-height:12px">6</div>
<div class="a t" style="left:100px;top:670px;width:26px;text-align:right;color:#c4c4c4;font-size:10.5px;line-height:12px">0</div>
<div class="a t" style="left:100px;top:697px;width:26px;text-align:right;color:#c4c4c4;font-size:10.5px;line-height:12px">-6</div>
<div class="a t" style="left:100px;top:718px;width:26px;text-align:right;color:#c4c4c4;font-size:10.5px;line-height:12px">-12</div>
<div class="a t" style="left:100px;top:730px;width:26px;text-align:right;color:#c4c4c4;font-size:10.5px;line-height:12px">-18</div>
<div class="a t" style="left:100px;top:739px;width:26px;text-align:right;color:#c4c4c4;font-size:10.5px;line-height:12px">-24</div>
<div class="a t" style="left:100px;top:754px;width:26px;text-align:right;color:#c4c4c4;font-size:10.5px;line-height:12px">-36</div>
<div class="a t" style="left:100px;top:772px;width:26px;text-align:right;color:#c4c4c4;font-size:10.5px;line-height:12px">-&#8734;</div>
<svg class="a" style="left:129px;top:648px;" width="7" height="138" viewBox="0 0 7 138"><path d="M0 0.5H7" stroke="#6a6b6d" stroke-width="1"/><path d="M0 3.5H7" stroke="#6a6b6d" stroke-width="1"/><path d="M0 6.5H7" stroke="#6a6b6d" stroke-width="1"/><path d="M0 9.5H7" stroke="#6a6b6d" stroke-width="1"/><path d="M0 12.5H7" stroke="#6a6b6d" stroke-width="1"/><path d="M0 15.5H7" stroke="#6a6b6d" stroke-width="1"/><path d="M0 18.5H7" stroke="#6a6b6d" stroke-width="1"/><path d="M0 21.5H7" stroke="#6a6b6d" stroke-width="1"/><path d="M0 24.5H7" stroke="#6a6b6d" stroke-width="1"/><path d="M0 27.5H7" stroke="#6a6b6d" stroke-width="1"/><path d="M0 30.5H7" stroke="#6a6b6d" stroke-width="1"/><path d="M0 33.5H7" stroke="#6a6b6d" stroke-width="1"/><path d="M0 36.5H7" stroke="#6a6b6d" stroke-width="1"/><path d="M0 39.5H7" stroke="#6a6b6d" stroke-width="1"/><path d="M0 42.5H7" stroke="#6a6b6d" stroke-width="1"/><path d="M0 45.5H7" stroke="#6a6b6d" stroke-width="1"/><path d="M0 48.5H7" stroke="#6a6b6d" stroke-width="1"/><path d="M0 51.5H7" stroke="#6a6b6d" stroke-width="1"/><path d="M0 54.5H7" stroke="#6a6b6d" stroke-width="1"/><path d="M0 57.5H7" stroke="#6a6b6d" stroke-width="1"/><path d="M0 60.5H7" stroke="#6a6b6d" stroke-width="1"/><path d="M0 63.5H7" stroke="#6a6b6d" stroke-width="1"/><path d="M0 66.5H7" stroke="#6a6b6d" stroke-width="1"/><path d="M0 69.5H7" stroke="#6a6b6d" stroke-width="1"/><path d="M0 72.5H7" stroke="#6a6b6d" stroke-width="1"/><path d="M0 75.5H7" stroke="#6a6b6d" stroke-width="1"/><path d="M0 78.5H7" stroke="#6a6b6d" stroke-width="1"/><path d="M0 81.5H7" stroke="#6a6b6d" stroke-width="1"/><path d="M0 84.5H7" stroke="#6a6b6d" stroke-width="1"/><path d="M0 87.5H7" stroke="#6a6b6d" stroke-width="1"/><path d="M0 90.5H7" stroke="#6a6b6d" stroke-width="1"/><path d="M0 93.5H7" stroke="#6a6b6d" stroke-width="1"/><path d="M0 96.5H7" stroke="#6a6b6d" stroke-width="1"/><path d="M0 99.5H7" stroke="#6a6b6d" stroke-width="1"/><path d="M0 102.5H7" stroke="#6a6b6d" stroke-width="1"/><path d="M0 105.5H7" stroke="#6a6b6d" stroke-width="1"/><path d="M0 108.5H7" stroke="#6a6b6d" stroke-width="1"/><path d="M0 111.5H7" stroke="#6a6b6d" stroke-width="1"/><path d="M0 114.5H7" stroke="#6a6b6d" stroke-width="1"/><path d="M0 117.5H7" stroke="#6a6b6d" stroke-width="1"/><path d="M0 120.5H7" stroke="#6a6b6d" stroke-width="1"/><path d="M0 123.5H7" stroke="#6a6b6d" stroke-width="1"/><path d="M0 126.5H7" stroke="#6a6b6d" stroke-width="1"/><path d="M0 129.5H7" stroke="#6a6b6d" stroke-width="1"/></svg>
<div class="a" style="left:148px;top:643px;width:4px;height:138px;background:#1b1c1d;border-radius:2px"></div>
<div class="a" style="left:140px;top:662px;width:20px;height:29px;background:linear-gradient(#4a5a60,#3e4c52 45%,#364046);border-radius:3px;box-shadow:0 1px 2px #111"></div>
<div class="a" style="left:140px;top:674px;width:20px;height:4px;background:#dff0f8"></div>
<div class="a" style="left:164px;top:643px;width:29px;height:133px;background:#28292a"></div>
<div class="a" style="left:164px;top:775px;width:29px;height:1px;background:#777"></div>
<div class="a t" style="left:164px;top:652px;width:13px;text-align:right;color:#a49a8c;font-size:8.5px;line-height:10px">-3</div>
<div class="a t" style="left:164px;top:661px;width:13px;text-align:right;color:#a49a8c;font-size:8.5px;line-height:10px">-6</div>
<div class="a t" style="left:164px;top:670px;width:13px;text-align:right;color:#a49a8c;font-size:8.5px;line-height:10px">-9</div>
<div class="a t" style="left:164px;top:678px;width:13px;text-align:right;color:#a49a8c;font-size:8.5px;line-height:10px">-12</div>
<div class="a t" style="left:164px;top:687px;width:13px;text-align:right;color:#a49a8c;font-size:8.5px;line-height:10px">-15</div>
<div class="a t" style="left:164px;top:696px;width:13px;text-align:right;color:#a49a8c;font-size:8.5px;line-height:10px">-18</div>
<div class="a t" style="left:164px;top:704px;width:13px;text-align:right;color:#a49a8c;font-size:8.5px;line-height:10px">-21</div>
<div class="a t" style="left:164px;top:713px;width:13px;text-align:right;color:#a49a8c;font-size:8.5px;line-height:10px">-24</div>
<div class="a t" style="left:164px;top:722px;width:13px;text-align:right;color:#a49a8c;font-size:8.5px;line-height:10px">-27</div>
<div class="a t" style="left:164px;top:731px;width:13px;text-align:right;color:#a49a8c;font-size:8.5px;line-height:10px">-30</div>
<div class="a t" style="left:164px;top:740px;width:13px;text-align:right;color:#a49a8c;font-size:8.5px;line-height:10px">-33</div>
<div class="a t" style="left:164px;top:748px;width:13px;text-align:right;color:#a49a8c;font-size:8.5px;line-height:10px">-36</div>
<div class="a t" style="left:164px;top:757px;width:13px;text-align:right;color:#a49a8c;font-size:8.5px;line-height:10px">-39</div>
<div class="a t" style="left:129px;top:790px;width:40px;text-align:center;color:#e0e4e8;font-size:11px;line-height:13px">0.0</div>
<div class="a" style="left:133px;top:812px;width:32px;height:32px;background:#262728"></div>
<svg class="a" style="left:138px;top:818px;" width="24" height="22" viewBox="0 0 24 22"><path d="M1 5.5h17M1 15h17" stroke="#f8f8f8" stroke-width="3"/><path d="M16 1.5l6.5 4-6.5 4zM16 11l6.5 4-6.5 4z" fill="#f8f8f8"/></svg>
<div class="a" style="left:100px;top:849px;width:98px;height:1px;background:#1e1f20"></div>
<div class="a" style="left:100px;top:850px;width:98px;height:1px;background:#606163"></div>
<div class="a t" style="left:102px;top:854px;width:94px;text-align:center;color:#8a8b8d;font-size:12px;line-height:14px">In / Out</div>
<div class="a" style="left:96px;top:115px;width:4px;height:757px;background:#1e1f20"></div>
<div class="a" style="left:198px;top:115px;width:4px;height:757px;background:#1e1f20"></div>
<div class="a" style="left:202px;top:107px;width:6px;height:765px;background:#3d4042"></div>
<div class="a" style="left:208px;top:107px;width:5px;height:765px;background:#27282a"></div>
<div class="a" style="left:1px;top:870px;width:92px;height:2px;background:#6a6b6d"></div>
<div class="a" style="left:213px;top:110px;width:1359px;height:53px;background:#333436"></div>
<div class="a" style="left:213px;top:110px;width:2px;height:53px;background:#4a4d4f"></div>
<div class="a" style="left:215px;top:110px;width:800px;height:13px;border:1.3px solid #52c0ec"></div>
<div class="a" style="left:215px;top:110px;width:4px;height:4px;background:#52c0ec"></div>
<div class="a" style="left:215px;top:119px;width:4px;height:4px;background:#52c0ec"></div>
<div class="a" style="left:613px;top:110px;width:3px;height:3px;background:#52c0ec"></div>
<div class="a" style="left:613px;top:120px;width:3px;height:3px;background:#52c0ec"></div>
<div class="a" style="left:1011px;top:110px;width:4px;height:4px;background:#52c0ec"></div>
<div class="a" style="left:1011px;top:119px;width:4px;height:4px;background:#52c0ec"></div>
<div class="a" style="left:358px;top:110px;width:1.5px;height:53px;background:#e8e8e8"></div>
<div class="a" style="left:1562px;top:110px;width:10px;height:53px;background:#3a3b3d"></div>
<svg class="a" style="left:1565px;top:115px;" width="7" height="6" viewBox="0 0 7 6"><path d="M0 6L3.5 0 7 6z" fill="#111"/></svg>
<div class="a" style="left:1564px;top:127px;width:8px;height:15px;background:#c8c8c8"></div>
<svg class="a" style="left:1565px;top:150px;" width="7" height="6" viewBox="0 0 7 6"><path d="M0 0h7L3.5 6z" fill="#111"/></svg>
<div class="a" style="left:213px;top:163px;width:1359px;height:6px;background:#1c1c1c"></div>
<div class="a" style="left:213px;top:169px;width:1359px;height:57px;background:#45494a"></div>
<div class="a" style="left:213px;top:226px;width:1359px;height:2px;background:#1e1e1e"></div>
<div class="a" style="left:213px;top:228px;width:1349px;height:1px;background:#555"></div>
<svg class="a" style="left:218px;top:179px;" width="28" height="28" viewBox="0 0 28 28"><rect x="2" y="2" width="24" height="24" fill="#333537"/><path d="M0.7 4.5V0.7H4.5M23.5 0.7h3.8v3.8M27.3 23.5v3.8h-3.8M4.5 27.3H0.7v-3.8" stroke="#f0f0f0" stroke-width="1.3" fill="none"/><path d="M14 8v12M8 14h12" stroke="#d4d4d4" stroke-width="1.9"/></svg>
<div class="a" style="left:251px;top:181px;width:24px;height:24px;background:#333537;border-radius:3px"></div>
<svg class="a" style="left:254px;top:184px;" width="18" height="18" viewBox="0 0 18 18"><path d="M1.5 11.5V1.5H11.5V3.5" stroke="#cfcfcf" stroke-width="1.1" fill="none"/><rect x="5.5" y="5.5" width="11" height="11" fill="#333537" stroke="#cfcfcf" stroke-width="1.1"/><path d="M11 7.5v8M7 11.5h8" stroke="#cfcfcf" stroke-width="1.7"/></svg>
<div class="a" style="left:597px;top:181px;width:66px;height:24px;background:#333537;border-radius:2px 0 0 2px"></div>
<div class="a t" style="left:602px;top:185px;color:#d4d8dc;font-size:12px;line-height:15px">[Lens]</div>
<div class="a" style="left:1407px;top:172px;width:155px;height:44px;background:#3d4042;border:1px solid #8a8b8d;border-left:none"></div>
<div class="a" style="left:1407px;top:196px;width:154px;height:1px;background:#7a7b7d"></div>
<div class="a" style="left:1407px;top:209px;width:154px;height:1px;background:#7a7b7d"></div>
<div class="a" style="left:1407px;top:172px;width:7px;height:44px;background:#2f3133"></div>
<div class="a t" style="left:1483px;top:184px;color:#e0e6ee;font-size:10px;line-height:12px">10</div>
<div class="a" style="left:1481px;top:182px;width:1px;height:15px;background:#8a8b8d"></div>
<div class="a" style="left:1420px;top:192px;width:1px;height:4px;background:#8a8b8d"></div>
<div class="a" style="left:1440px;top:192px;width:1px;height:4px;background:#8a8b8d"></div>
<div class="a" style="left:1461px;top:192px;width:1px;height:4px;background:#8a8b8d"></div>
<div class="a" style="left:1500px;top:192px;width:1px;height:4px;background:#8a8b8d"></div>
<div class="a" style="left:1521px;top:192px;width:1px;height:4px;background:#8a8b8d"></div>
<div class="a" style="left:1542px;top:192px;width:1px;height:4px;background:#8a8b8d"></div>
<div class="a" style="left:1419px;top:203px;width:1px;height:6px;background:#8a8b8d"></div>
<div class="a" style="left:1437px;top:203px;width:1px;height:6px;background:#8a8b8d"></div>
<div class="a" style="left:1456px;top:203px;width:1px;height:6px;background:#8a8b8d"></div>
<div class="a" style="left:1500px;top:203px;width:1px;height:6px;background:#8a8b8d"></div>
<div class="a" style="left:1519px;top:203px;width:1px;height:6px;background:#8a8b8d"></div>
<div class="a" style="left:1537px;top:203px;width:1px;height:6px;background:#8a8b8d"></div>
<div class="a" style="left:1480px;top:197px;width:1px;height:13px;background:#8a8b8d"></div>
<div class="a t" style="left:1396px;top:198px;color:#d0dae6;font-size:9.6px;line-height:12px">00:00:16:00</div>
<div class="a t" style="left:1483px;top:198px;color:#d0dae6;font-size:9.6px;line-height:12px">00:00:18:00</div>
<div class="a" style="left:1562px;top:172px;width:10px;height:54px;background:#45494a"></div>
<div class="a" style="left:1563px;top:185px;width:9px;height:13px;background:#333537"></div>
<div class="a" style="left:1563px;top:201px;width:9px;height:13px;background:#333537"></div>
<div class="a t" style="left:1564px;top:183px;color:#ddd;font-size:14px;line-height:14px;font-weight:bold">&#8211;</div>
<div class="a t" style="left:1564px;top:199px;color:#ddd;font-size:15px;line-height:15px;font-weight:bold">+</div>
<div class="a" style="left:213px;top:229px;width:1349px;height:643px;background:#1e1e1e"></div>
<div class="a" style="left:216px;top:228px;width:8px;height:100px;background:#0a8052"></div>
<div class="a t" style="left:217px;top:230px;color:#d8e8e0;font-size:9px;line-height:10px">1</div>
<div class="a" style="left:224px;top:228px;width:2px;height:98px;background:#232425"></div>
<div class="a" style="left:226px;top:228px;width:7px;height:98px;background:#2f3032"></div>
<div class="a" style="left:233px;top:228px;width:1px;height:98px;background:#3a3b3d"></div>
<div class="a" style="left:234px;top:228px;width:429px;height:98px;background:#333436"></div>
<div class="a t" style="left:248px;top:233px;color:#e0e8f0;font-size:12px;line-height:14px">1</div>
<svg class="a" style="left:273px;top:233px;" width="18" height="15" viewBox="0 0 18 15"><path d="M1 8h3l1.5-3 1.5 7 2-10 2 11 1.5-6 1.5 3 2-2h2" stroke="#e8e8e8" stroke-width="1.3" fill="none"/></svg>
<div class="a" style="left:297px;top:231px;width:90px;height:18px;background:#27282a"></div>
<div class="a t" style="left:301px;top:233px;color:#eef4fa;font-size:11px;line-height:14px;font-weight:bold">Track 1</div>
<div class="a" style="left:393px;top:230px;width:20px;height:20px;background:#4a4b4d;border-radius:2px"></div>
<div class="a t" style="left:393px;top:233px;width:20px;text-align:center;color:#dedede;font-size:12px;line-height:14px">M</div>
<div class="a" style="left:417px;top:230px;width:20px;height:20px;background:#4a4b4d;border-radius:2px"></div>
<div class="a t" style="left:417px;top:233px;width:20px;text-align:center;color:#dedede;font-size:12px;line-height:14px">S</div>
<div class="a" style="left:441px;top:230px;width:20px;height:20px;background:#4a4b4d;border-radius:2px"></div>
<svg class="a" style="left:445px;top:234px;" width="12" height="12" viewBox="0 0 12 12"><circle cx="6" cy="6" r="5" fill="#e5383f"/></svg>
<div class="a" style="left:465px;top:230px;width:20px;height:20px;background:#4a4b4d;border-radius:2px"></div>
<svg class="a" style="left:467px;top:233px;" width="16" height="14" viewBox="0 0 16 14"><circle cx="3" cy="7" r="1.8" fill="#ddd"/><path d="M6.5 3.5q2 3.5 0 7M9.5 2q3 5 0 10M12.5 1q3.5 6 0 12" stroke="#ddd" stroke-width="1.1" fill="none"/></svg>
<div class="a" style="left:490px;top:230px;width:92px;height:19px;background:#4a4b4d;border-radius:2px"></div>
<div class="a t" style="left:494px;top:232px;color:#e4e4e4;font-size:11.3px;line-height:15px">Clips</div>
<svg class="a" style="left:568px;top:236px;" width="9" height="8" viewBox="0 0 9 8"><path d="M0 0h9L4.5 8z" fill="#c8c8c8"/></svg>
<div class="a" style="left:258px;top:255px;width:32px;height:32px;background:#27282a"></div>
<svg class="a" style="left:261px;top:261px;" width="26" height="20" viewBox="0 0 26 20"><path d="M1 11h3l1.5-3 1.5 5 1.5-9 2 13 2-15 2 12 1.5-6 1.5 5 1.5-3 1 2h3" stroke="#f0f0f0" stroke-width="1.4" fill="none"/></svg>
<div class="a" style="left:296px;top:254px;width:20px;height:20px;background:#d8d8d8;border-radius:2px"></div>
<div class="a t" style="left:296px;top:257px;width:20px;text-align:center;color:#151515;font-size:12px;line-height:14px">R</div>
<div class="a" style="left:320px;top:254px;width:20px;height:20px;background:#4a4b4d;border-radius:2px"></div>
<div class="a t" style="left:323px;top:257px;color:#dedede;font-size:12px;line-height:14px">W</div>
<div class="a t" style="left:333px;top:262px;color:#dedede;font-size:8px;line-height:9px">T</div>
<div class="a" style="left:344px;top:254px;width:20px;height:20px;background:#4a4b4d;border-radius:2px"></div>
<svg class="a" style="left:347px;top:257px;" width="14" height="14" viewBox="0 0 14 14"><path d="M7 1.5v11M2.2 4.2l9.6 5.6M2.2 9.8l9.6-5.6" stroke="#e6e6e6" stroke-width="2"/></svg>
<div class="a" style="left:368px;top:254px;width:20px;height:20px;background:#4a4b4d;border-radius:2px"></div>
<div class="a t" style="left:368px;top:257px;width:20px;text-align:center;color:#dedede;font-size:14px;line-height:14px">A</div>
<div class="a" style="left:393px;top:254px;width:91px;height:20px;background:#1f2021;border-radius:3px;box-shadow:inset 0 0 0 1px #151617"></div>
<div class="a t" style="left:396px;top:255px;color:#7a6e62;font-size:11.3px;line-height:13px">Volume</div>
<div class="a t" style="left:393px;top:255px;width:87px;text-align:right;color:#d8dde4;font-size:11px;line-height:13px">0.0</div>
<div class="a" style="left:394px;top:268px;width:89px;height:4px;background:#6b6c6e"></div>
<div class="a" style="left:394px;top:268px;width:70px;height:4px;background:#d8f2f8"></div>
<div class="a" style="left:297px;top:279px;width:90px;height:20px;background:#1f2021;border-radius:3px;box-shadow:inset 0 0 0 1px #151617"></div>
<div class="a t" style="left:300px;top:280px;color:#7a6e62;font-size:11.3px;line-height:13px">Pan</div>
<div class="a t" style="left:297px;top:280px;width:86px;text-align:right;color:#d8dde4;font-size:11px;line-height:13px">0% C</div>
<div class="a" style="left:298px;top:293px;width:88px;height:4px;background:#6b6c6e"></div>
<div class="a" style="left:298px;top:293px;width:0px;height:4px;background:#d8f2f8"></div>
<div class="a" style="left:338px;top:293px;width:6px;height:4px;background:#d8f2f8"></div>
<div class="a" style="left:393px;top:279px;width:91px;height:20px;background:#1f2021;border-radius:3px;box-shadow:inset 0 0 0 1px #151617"></div>
<div class="a t" style="left:396px;top:280px;color:#7a6e62;font-size:11.3px;line-height:13px">Gain</div>
<div class="a t" style="left:393px;top:280px;width:87px;text-align:right;color:#d8dde4;font-size:11px;line-height:13px">0.0</div>
<div class="a" style="left:394px;top:293px;width:89px;height:4px;background:#6b6c6e"></div>
<div class="a" style="left:394px;top:293px;width:45px;height:4px;background:#d8f2f8"></div>
<div class="a" style="left:236px;top:304px;width:20px;height:20px;background:#4a4b4d;border-radius:2px"></div>
<div class="a" style="left:236px;top:304px;width:20px;height:20px;background:#8e6a44;border-radius:2px"></div>
<svg class="a" style="left:239px;top:308px;" width="14" height="12" viewBox="0 0 14 12"><path d="M1 6h12M3 2h7M4 10h8" stroke="#ddd" stroke-width="1.6"/></svg>
<div class="a" style="left:260px;top:304px;width:20px;height:20px;background:#4a4b4d;border-radius:2px"></div>
<svg class="a" style="left:262px;top:307px;" width="16" height="14" viewBox="0 0 16 14"><path d="M2 12L6 3l4 8 4-7" stroke="#ddd" stroke-width="1.3" fill="none"/><circle cx="2" cy="12" r="1.3" fill="#ddd"/><circle cx="14" cy="4" r="1.3" fill="#ddd"/></svg>
<div class="a" style="left:297px;top:304px;width:90px;height:19px;background:#4a4b4d;border-radius:2px"></div>
<div class="a" style="left:299px;top:307px;width:10px;height:13px;background:#8a8b8d;border-radius:2px"></div>
<div class="a" style="left:303px;top:309px;width:2px;height:9px;background:#4a4b4d"></div>
<div class="a t" style="left:312px;top:306px;color:#e4e4e4;font-size:11.3px;line-height:15px">RghtAFU...</div>
<svg class="a" style="left:373px;top:310px;" width="9" height="8" viewBox="0 0 9 8"><path d="M0 0h9L4.5 8z" fill="#c8c8c8"/></svg>
<div class="a" style="left:393px;top:304px;width:92px;height:19px;background:#4a4b4d;border-radius:2px"></div>
<div class="a" style="left:395px;top:307px;width:10px;height:13px;background:#8a8b8d;border-radius:2px"></div>
<svg class="a" style="left:396px;top:309px;" width="8" height="9" viewBox="0 0 8 9"><ellipse cx="4" cy="4.5" rx="2.6" ry="3.3" fill="none" stroke="#4a4b4d" stroke-width="1.6"/></svg>
<div class="a t" style="left:408px;top:306px;color:#e4e4e4;font-size:11.3px;line-height:15px">Master</div>
<svg class="a" style="left:471px;top:310px;" width="9" height="8" viewBox="0 0 9 8"><path d="M0 0h9L4.5 8z" fill="#c8c8c8"/></svg>
<div class="a" style="left:581px;top:254px;width:82px;height:70px;background:#27282a"></div>
<svg class="a" style="left:583px;top:256px;" width="12" height="13" viewBox="0 0 12 13"><path d="M3.2 3.5A4.2 4.2 0 1 0 8.8 3.5" stroke="#e08a30" stroke-width="1.6" fill="none"/><path d="M6 1.5v5" stroke="#e08a30" stroke-width="1.6"/></svg>
<div class="a t" style="left:599px;top:255px;color:#e6e6e6;font-size:12px;line-height:14px">FX</div>
<div class="a" style="left:213px;top:326px;width:450px;height:2px;background:#242526"></div>
<div class="a" style="left:216px;top:328px;width:8px;height:100px;background:#0a8052"></div>
<div class="a t" style="left:217px;top:330px;color:#d8e8e0;font-size:9px;line-height:10px">2</div>
<div class="a" style="left:224px;top:328px;width:2px;height:98px;background:#232425"></div>
<div class="a" style="left:226px;top:328px;width:7px;height:98px;background:#2f3032"></div>
<div class="a" style="left:233px;top:328px;width:1px;height:98px;background:#3a3b3d"></div>
<div class="a" style="left:234px;top:328px;width:429px;height:98px;background:#333436"></div>
<div class="a t" style="left:248px;top:333px;color:#e0e8f0;font-size:12px;line-height:14px">2</div>
<div class="a" style="left:272px;top:330px;width:20px;height:20px;background:#2a2b2c;border:1px solid #666;border-radius:2px"></div>
<svg class="a" style="left:275px;top:333px;" width="14" height="14" viewBox="0 0 14 14"><rect x="1" y="1" width="12" height="12" rx="1" fill="#eee"/><rect x="2" y="2" width="10" height="3" fill="#888"/><path d="M4 6v6M6.5 6v6M9 6v6" stroke="#333" stroke-width="1"/></svg>
<div class="a" style="left:297px;top:331px;width:90px;height:18px;background:#e8bb78;border-radius:2px"></div>
<div class="a t" style="left:300px;top:333px;color:#1a1a1a;font-size:11.3px;line-height:14px">Cakewalk TTS-1</div>
<div class="a" style="left:393px;top:330px;width:20px;height:20px;background:#4a4b4d;border-radius:2px"></div>
<div class="a t" style="left:393px;top:333px;width:20px;text-align:center;color:#dedede;font-size:12px;line-height:14px">M</div>
<div class="a" style="left:417px;top:330px;width:20px;height:20px;background:#4a4b4d;border-radius:2px"></div>
<div class="a t" style="left:417px;top:333px;width:20px;text-align:center;color:#dedede;font-size:12px;line-height:14px">S</div>
<div class="a" style="left:441px;top:330px;width:20px;height:20px;background:#e5383f;border-radius:2px"></div>
<svg class="a" style="left:440px;top:329px;" width="22" height="22" viewBox="0 0 22 22"><path d="M0.5 4V0.5H4M18 0.5h3.5V4M21.5 18v3.5H18M4 21.5H0.5V18" stroke="#fff" stroke-width="1" fill="none"/></svg>
<svg class="a" style="left:445px;top:334px;" width="12" height="12" viewBox="0 0 12 12"><circle cx="6" cy="6" r="5" fill="#f7b0b4"/></svg>
<div class="a" style="left:465px;top:330px;width:20px;height:20px;background:#d48a40;border-radius:2px"></div>
<svg class="a" style="left:466px;top:331px;" width="19" height="18" viewBox="0 0 19 18"><circle cx="3.5" cy="6.5" r="1.6" fill="#111"/><path d="M6.5 3.5q1.5 3 0 6M9 2q2.2 4.5 0 9M11.5 1q2.8 5.5 0 12" stroke="#111" stroke-width="1" fill="none"/></svg>
<div class="a t" style="left:477px;top:337px;color:#111;font-size:11px;line-height:11px">A</div>
<div class="a" style="left:490px;top:330px;width:92px;height:19px;background:#4a4b4d;border-radius:2px"></div>
<div class="a t" style="left:494px;top:332px;color:#e4e4e4;font-size:11.3px;line-height:15px">Clips</div>
<svg class="a" style="left:568px;top:336px;" width="9" height="8" viewBox="0 0 9 8"><path d="M0 0h9L4.5 8z" fill="#c8c8c8"/></svg>
<div class="a" style="left:258px;top:355px;width:32px;height:32px;background:#27282a"></div>
<svg class="a" style="left:263px;top:360px;" width="22" height="22" viewBox="0 0 22 22"><rect x="1" y="1" width="20" height="20" rx="2" fill="#f0f0f0"/><rect x="2.5" y="2.5" width="17" height="5" fill="#7a7a7a"/><path d="M5 9v10M8.5 9v10M12 9v10M15.5 9v10" stroke="#222" stroke-width="1.4"/></svg>
<div class="a" style="left:296px;top:354px;width:20px;height:20px;background:#d8d8d8;border-radius:2px"></div>
<div class="a t" style="left:296px;top:357px;width:20px;text-align:center;color:#151515;font-size:12px;line-height:14px">R</div>
<div class="a" style="left:320px;top:354px;width:20px;height:20px;background:#4a4b4d;border-radius:2px"></div>
<div class="a t" style="left:323px;top:357px;color:#dedede;font-size:12px;line-height:14px">W</div>
<div class="a t" style="left:333px;top:362px;color:#dedede;font-size:8px;line-height:9px">T</div>
<div class="a" style="left:344px;top:354px;width:20px;height:20px;background:#4a4b4d;border-radius:2px"></div>
<svg class="a" style="left:347px;top:357px;" width="14" height="14" viewBox="0 0 14 14"><path d="M7 1.5v11M2.2 4.2l9.6 5.6M2.2 9.8l9.6-5.6" stroke="#7a7b7d" stroke-width="2"/></svg>
<div class="a" style="left:368px;top:354px;width:20px;height:20px;background:#4a4b4d;border-radius:2px"></div>
<div class="a t" style="left:368px;top:357px;width:20px;text-align:center;color:#dedede;font-size:14px;line-height:14px">A</div>
<div class="a" style="left:393px;top:354px;width:91px;height:20px;background:#1f2021;border-radius:3px;box-shadow:inset 0 0 0 1px #151617"></div>
<div class="a t" style="left:396px;top:355px;color:#7a6e62;font-size:11.3px;line-height:13px">Volume</div>
<div class="a t" style="left:393px;top:355px;width:87px;text-align:right;color:#d8dde4;font-size:11px;line-height:13px">0.0</div>
<div class="a" style="left:394px;top:368px;width:89px;height:4px;background:#6b6c6e"></div>
<div class="a" style="left:394px;top:368px;width:70px;height:4px;background:#d8f2f8"></div>
<div class="a" style="left:297px;top:379px;width:90px;height:20px;background:#1f2021;border-radius:3px;box-shadow:inset 0 0 0 1px #151617"></div>
<div class="a t" style="left:300px;top:380px;color:#7a6e62;font-size:11.3px;line-height:13px">Pan</div>
<div class="a t" style="left:297px;top:380px;width:86px;text-align:right;color:#d8dde4;font-size:11px;line-height:13px">0% C</div>
<div class="a" style="left:298px;top:393px;width:88px;height:4px;background:#6b6c6e"></div>
<div class="a" style="left:298px;top:393px;width:0px;height:4px;background:#d8f2f8"></div>
<div class="a" style="left:338px;top:393px;width:6px;height:4px;background:#d8f2f8"></div>
<div class="a" style="left:393px;top:379px;width:91px;height:20px;background:#1f2021;border-radius:3px;box-shadow:inset 0 0 0 1px #151617"></div>
<div class="a t" style="left:396px;top:380px;color:#7a6e62;font-size:11.3px;line-height:13px">Vel+</div>
<div class="a t" style="left:393px;top:380px;width:87px;text-align:right;color:#d8dde4;font-size:11px;line-height:13px">0</div>
<div class="a" style="left:394px;top:393px;width:89px;height:4px;background:#6b6c6e"></div>
<div class="a" style="left:394px;top:393px;width:45px;height:4px;background:#d8f2f8"></div>
<div class="a" style="left:236px;top:404px;width:20px;height:20px;background:#4a4b4d;border-radius:2px"></div>
<svg class="a" style="left:239px;top:408px;" width="14" height="12" viewBox="0 0 14 12"><path d="M1 6h12M3 2h7M4 10h8" stroke="#ddd" stroke-width="1.6"/></svg>
<div class="a" style="left:260px;top:404px;width:20px;height:20px;background:#4a4b4d;border-radius:2px"></div>
<svg class="a" style="left:262px;top:407px;" width="16" height="14" viewBox="0 0 16 14"><path d="M2 12L6 3l4 8 4-7" stroke="#ddd" stroke-width="1.3" fill="none"/><circle cx="2" cy="12" r="1.3" fill="#ddd"/><circle cx="14" cy="4" r="1.3" fill="#ddd"/></svg>
<div class="a" style="left:297px;top:404px;width:90px;height:19px;background:#4a4b4d;border-radius:2px"></div>
<div class="a" style="left:299px;top:407px;width:10px;height:13px;background:#8a8b8d;border-radius:2px"></div>
<div class="a" style="left:303px;top:409px;width:2px;height:9px;background:#4a4b4d"></div>
<div class="a t" style="left:312px;top:406px;color:#e4e4e4;font-size:11.3px;line-height:15px">AllInptsOm</div>
<svg class="a" style="left:373px;top:410px;" width="9" height="8" viewBox="0 0 9 8"><path d="M0 0h9L4.5 8z" fill="#c8c8c8"/></svg>
<div class="a" style="left:393px;top:404px;width:92px;height:19px;background:#4a4b4d;border-radius:2px"></div>
<div class="a" style="left:395px;top:407px;width:10px;height:13px;background:#8a8b8d;border-radius:2px"></div>
<svg class="a" style="left:396px;top:409px;" width="8" height="9" viewBox="0 0 8 9"><ellipse cx="4" cy="4.5" rx="2.6" ry="3.3" fill="none" stroke="#4a4b4d" stroke-width="1.6"/></svg>
<div class="a t" style="left:408px;top:406px;color:#e4e4e4;font-size:11.3px;line-height:15px">Master</div>
<svg class="a" style="left:471px;top:410px;" width="9" height="8" viewBox="0 0 9 8"><path d="M0 0h9L4.5 8z" fill="#c8c8c8"/></svg>
<div class="a" style="left:581px;top:354px;width:82px;height:70px;background:#27282a"></div>
<svg class="a" style="left:583px;top:356px;" width="12" height="13" viewBox="0 0 12 13"><path d="M3.2 3.5A4.2 4.2 0 1 0 8.8 3.5" stroke="#e08a30" stroke-width="1.6" fill="none"/><path d="M6 1.5v5" stroke="#e08a30" stroke-width="1.6"/></svg>
<div class="a t" style="left:599px;top:355px;color:#e6e6e6;font-size:12px;line-height:14px">FX</div>
<div class="a" style="left:213px;top:426px;width:450px;height:2px;background:#242526"></div>
<div class="a" style="left:663px;top:229px;width:899px;height:99px;background:#333436"></div>
<div class="a" style="left:663px;top:327px;width:899px;height:1px;background:#252627"></div>
<div class="a" style="left:663px;top:328px;width:899px;height:99px;background:#504244"></div>
<div class="a" style="left:663px;top:328px;width:899px;height:1px;background:#5a4446"></div>
<div class="a" style="left:1407px;top:329px;width:2px;height:98px;background:#473a3c"></div>
<div class="a" style="left:213px;top:427px;width:450px;height:1px;background:#252627"></div>
<div class="a" style="left:1562px;top:229px;width:10px;height:643px;background:#3a3b3d"></div>
<div class="a" style="left:1564px;top:244px;width:8px;height:628px;background:#b8b8b8"></div>
<svg class="a" style="left:1565px;top:232px;" width="7" height="6" viewBox="0 0 7 6"><path d="M0 6L3.5 0 7 6z" fill="#111"/></svg>
<div class="a" style="left:713px;top:793px;width:23px;height:79px;background:#3c3f41"></div>
<div class="a" style="left:884px;top:793px;width:1px;height:79px;background:#e8e8e8"></div>
<div class="a" style="left:213px;top:229px;width:1px;height:643px;background:#48494b"></div>
<div class="a" style="left:214px;top:229px;width:2px;height:643px;background:#1e1e1e"></div>
<div class="a" style="left:216px;top:428px;width:8px;height:444px;background:#1e1e1e"></div>
<div class="a" style="left:663px;top:150px;width:744px;height:643px;background:#fdfdfd;box-shadow:0 0 9px rgba(0,0,0,.35)"></div>
<div class="a t" style="left:671px;top:157px;color:#9a9a9a;font-size:12px;line-height:14px">Preferences</div>
<svg class="a" style="left:1386px;top:158px;" width="12" height="12" viewBox="0 0 12 12"><path d="M1 1L11 11M11 1L1 11" stroke="#444" stroke-width="1"/></svg>
<div class="a" style="left:664px;top:181px;width:193px;height:577px;background:#fdfdfd;border:1px solid #828790"></div>
<div class="a" style="left:839px;top:182px;width:16px;height:575px;background:#fdfdfd"></div>
<div class="a" style="left:839px;top:200px;width:15px;height:338px;background:#cdcdcd"></div>
<svg class="a" style="left:841px;top:186px;" width="10" height="8" viewBox="0 0 10 8"><path d="M1 6.5L5 2.5 9 6.5" stroke="#606060" stroke-width="1.4" fill="none"/></svg>
<svg class="a" style="left:841px;top:742px;" width="10" height="8" viewBox="0 0 10 8"><path d="M1 1.5L5 5.5 9 1.5" stroke="#606060" stroke-width="1.4" fill="none"/></svg>
<div class="a t" style="left:676px;top:189px;color:#0a0a14;font-size:11.3px;line-height:14px;font-weight:bold">Audio</div>
<div class="a t" style="left:691px;top:214px;color:#0e0e18;font-size:11.3px;line-height:14px">Devices</div>
<div class="a t" style="left:691px;top:239px;color:#0e0e18;font-size:11.3px;line-height:14px">Driver Settings</div>
<div class="a t" style="left:691px;top:264px;color:#0e0e18;font-size:11.3px;line-height:14px">Playback and Recording</div>
<div class="a t" style="left:691px;top:289px;color:#1a1a8c;font-size:11.3px;line-height:14px">Configuration File</div>
<div class="a t" style="left:691px;top:314px;color:#1a1a8c;font-size:11.3px;line-height:14px">Sync and Caching</div>
<div class="a t" style="left:676px;top:339px;color:#0a0a14;font-size:11.3px;line-height:14px;font-weight:bold">MIDI</div>
<div class="a t" style="left:691px;top:364px;color:#0e0e18;font-size:11.3px;line-height:14px">Devices</div>
<div class="a t" style="left:691px;top:389px;color:#0e0e18;font-size:11.3px;line-height:14px">Playback and Recording</div>
<div class="a" style="left:668px;top:409px;width:168px;height:22px;background:linear-gradient(#f7b878 0%,#f3a060 35%,#ee8a34 60%,#f08424 80%,#fbae50 100%);border:1px solid #b8824a;border-radius:2px"></div>
<div class="a t" style="left:691px;top:414px;color:#20124a;font-size:11.3px;line-height:14px">Instruments</div>
<div class="a t" style="left:691px;top:439px;color:#0e0e18;font-size:11.3px;line-height:14px">Control Surfaces</div>
<div class="a t" style="left:691px;top:464px;color:#1a1a8c;font-size:11.3px;line-height:14px">Drum Map Manager</div>
<div class="a t" style="left:676px;top:489px;color:#0a0a14;font-size:11.3px;line-height:14px;font-weight:bold">File</div>
<div class="a t" style="left:691px;top:514px;color:#0e0e18;font-size:11.3px;line-height:14px">Folder Locations</div>
<div class="a t" style="left:691px;top:539px;color:#0e0e18;font-size:11.3px;line-height:14px">Audio Data</div>
<div class="a t" style="left:691px;top:564px;color:#0e0e18;font-size:11.3px;line-height:14px">VST Settings</div>
<div class="a t" style="left:691px;top:589px;color:#1a1a8c;font-size:11.3px;line-height:14px">Initialization File</div>
<div class="a t" style="left:691px;top:614px;color:#1a1a8c;font-size:11.3px;line-height:14px">Advanced</div>
<div class="a t" style="left:676px;top:639px;color:#0a0a14;font-size:11.3px;line-height:14px;font-weight:bold">Project</div>
<div class="a t" style="left:691px;top:664px;color:#0e0e18;font-size:11.3px;line-height:14px">Record</div>
<div class="a t" style="left:691px;top:689px;color:#0e0e18;font-size:11.3px;line-height:14px">MIDI</div>
<div class="a t" style="left:691px;top:714px;color:#0e0e18;font-size:11.3px;line-height:14px">Metronome</div>
<div class="a t" style="left:691px;top:739px;color:#0e0e18;font-size:11.3px;line-height:14px">AudioSnap</div>
<div class="a" style="left:862px;top:181px;width:543px;height:577px;background:#fdfdfd;border-left:1px solid #c8c8c8;border-right:1px solid #c8c8c8;border-bottom:1px solid #c8c8c8"></div>
<div class="a" style="left:862px;top:181px;width:543px;height:26px;background:#fdfdfd;border:1px solid #b8b8b8"></div>
<div class="a t" style="left:872px;top:187px;color:#000;font-size:11.1px;line-height:14px;font-weight:bold">Assign instrument definitions to MIDI output/channel configurations.</div>
<div class="a t" style="left:880px;top:219px;color:#000;font-size:10.7px;line-height:14px;letter-spacing:-0.05px">Select one or more Output/Channel destinations, then click on an Instrument.</div>
<div class="a t" style="left:880px;top:242px;color:#000;font-size:10.7px;line-height:14px">Output/Channel:</div>
<div class="a t" style="left:1090px;top:242px;color:#000;font-size:10.7px;line-height:14px">Uses Instrument:</div>
<div class="a" style="left:880px;top:264px;width:188px;height:212px;background:#fff;border:1px solid #828790"></div>
<div class="a" style="left:882px;top:266px;width:167px;height:13px;background:#0078d7"></div>
<div class="a t" style="left:884px;top:265px;color:#fff;font-size:11px;line-height:14px">1: MPK261 / 1</div>
<div class="a t" style="left:884px;top:278px;color:#000;font-size:11px;line-height:14px">1: MPK261 / 2</div>
<div class="a t" style="left:884px;top:291px;color:#000;font-size:11px;line-height:14px">1: MPK261 / 3</div>
<div class="a t" style="left:884px;top:304px;color:#000;font-size:11px;line-height:14px">1: MPK261 / 4</div>
<div class="a t" style="left:884px;top:317px;color:#000;font-size:11px;line-height:14px">1: MPK261 / 5</div>
<div class="a t" style="left:884px;top:330px;color:#000;font-size:11px;line-height:14px">1: MPK261 / 6</div>
<div class="a t" style="left:884px;top:343px;color:#000;font-size:11px;line-height:14px">1: MPK261 / 7</div>
<div class="a t" style="left:884px;top:356px;color:#000;font-size:11px;line-height:14px">1: MPK261 / 8</div>
<div class="a t" style="left:884px;top:369px;color:#000;font-size:11px;line-height:14px">1: MPK261 / 9</div>
<div class="a t" style="left:884px;top:382px;color:#000;font-size:11px;line-height:14px">1: MPK261 / 10</div>
<div class="a t" style="left:884px;top:395px;color:#000;font-size:11px;line-height:14px">1: MPK261 / 11</div>
<div class="a t" style="left:884px;top:408px;color:#000;font-size:11px;line-height:14px">1: MPK261 / 12</div>
<div class="a t" style="left:884px;top:421px;color:#000;font-size:11px;line-height:14px">1: MPK261 / 13</div>
<div class="a t" style="left:884px;top:434px;color:#000;font-size:11px;line-height:14px">1: MPK261 / 14</div>
<div class="a t" style="left:884px;top:447px;color:#000;font-size:11px;line-height:14px">1: MPK261 / 15</div>
<div class="a t" style="left:884px;top:460px;color:#000;font-size:11px;line-height:14px">1: MPK261 / 16</div>
<div class="a" style="left:1050px;top:265px;width:17px;height:210px;background:#fff"></div>
<div class="a" style="left:1050px;top:284px;width:15px;height:86px;background:#cdcdcd"></div>
<svg class="a" style="left:1053px;top:269px;" width="10" height="8" viewBox="0 0 10 8"><path d="M1 6.5L5 2.5 9 6.5" stroke="#606060" stroke-width="1.3" fill="none"/></svg>
<svg class="a" style="left:1053px;top:461px;" width="10" height="8" viewBox="0 0 10 8"><path d="M1 1.5L5 5.5 9 1.5" stroke="#606060" stroke-width="1.3" fill="none"/></svg>
<div class="a" style="left:1068px;top:269px;width:21px;height:2px;background:#111"></div>
<div class="a" style="left:1089px;top:264px;width:189px;height:173px;background:#fff;border:1px solid #828790"></div>
<div class="a" style="left:1091px;top:266px;width:185px;height:13px;background:#0078d7"></div>
<div class="a t" style="left:1093px;top:265px;color:#fff;font-size:10.6px;line-height:14px">&lt;default&gt;</div>
<div class="a t" style="left:1093px;top:278px;color:#000;font-size:10.6px;line-height:14px">General MIDI</div>
<div class="a t" style="left:1093px;top:291px;color:#000;font-size:10.6px;line-height:14px">General MIDI Drums</div>
<div class="a t" style="left:1093px;top:304px;color:#000;font-size:10.6px;line-height:14px">Generic (Patches 0..127)</div>
<div class="a t" style="left:1093px;top:317px;color:#000;font-size:10.6px;line-height:14px">Generic (Patches 1..128)</div>
<div class="a t" style="left:1093px;top:330px;color:#000;font-size:10.6px;line-height:14px">Roland GS</div>
<div class="a t" style="left:1093px;top:343px;color:#000;font-size:10.6px;line-height:14px">Roland GS Drumsets</div>
<div class="a t" style="left:1093px;top:356px;color:#000;font-size:10.6px;line-height:14px">SoundFont Device</div>
<div class="a t" style="left:1093px;top:369px;color:#000;font-size:10.6px;line-height:14px">Yamaha XG</div>
<div class="a t" style="left:1093px;top:382px;color:#000;font-size:10.6px;line-height:14px">Yamaha XG Drum Kits</div>
<div class="a" style="left:1207px;top:457px;width:71px;height:22px;background:#fdfdfd;border:1px solid #adadad"></div>
<div class="a t" style="left:1207px;top:461px;width:71px;text-align:center;color:#000;font-size:10.7px;line-height:14px">Define...</div>
<div class="a" style="left:880px;top:485px;width:13px;height:13px;background:#fff;border:1px solid #333"></div>
<svg class="a" style="left:881px;top:486px;" width="11" height="11" viewBox="0 0 11 11"><path d="M2 5.5l2.5 2.5L9.5 2.5" stroke="#222" stroke-width="1.2" fill="none"/></svg>
<div class="a t" style="left:896px;top:485px;color:#000;font-size:10.6px;line-height:14px">Save Changes for Next Session</div>
<svg class="a" style="left:669px;top:771px;" width="15" height="15" viewBox="0 0 15 15"><circle cx="7.5" cy="7.5" r="6.3" fill="#fff" stroke="#333" stroke-width="1"/></svg>
<div class="a t" style="left:686px;top:772px;color:#000;font-size:11px;line-height:14px">Basic</div>
<svg class="a" style="left:831px;top:771px;" width="15" height="15" viewBox="0 0 15 15"><circle cx="7.5" cy="7.5" r="6.3" fill="#fff" stroke="#333" stroke-width="1"/><circle cx="7.5" cy="7.5" r="3.5" fill="#222"/></svg>
<div class="a t" style="left:848px;top:772px;color:#000;font-size:11px;line-height:14px">Advanced</div>
<div class="a" style="left:1085px;top:766px;width:73px;height:21px;background:#fdfdfd;border:1px solid #adadad"></div>
<div class="a t" style="left:1085px;top:769px;width:73px;text-align:center;color:#000;font-size:11px;line-height:14px">OK</div>
<div class="a" style="left:1166px;top:766px;width:73px;height:21px;background:#fdfdfd;border:1px solid #adadad"></div>
<div class="a t" style="left:1166px;top:769px;width:73px;text-align:center;color:#000;font-size:11px;line-height:14px">Отмена</div>
<div class="a" style="left:1247px;top:766px;width:73px;height:21px;background:#fdfdfd;border:1px solid #adadad"></div>
<div class="a t" style="left:1247px;top:769px;width:73px;text-align:center;color:#000;font-size:11px;line-height:14px">Применить</div>
<div class="a" style="left:1328px;top:766px;width:73px;height:21px;background:#fdfdfd;border:1px solid #adadad"></div>
<div class="a t" style="left:1328px;top:769px;width:73px;text-align:center;color:#000;font-size:11px;line-height:14px">Справка</div>
<svg class="a" style="left:704px;top:228px;" width="12" height="20" viewBox="0 0 12 20"><path d="M1 1v15l3.5-3.5 2.5 5.5 2-1-2.5-5.2H11z" fill="#fff" stroke="#111" stroke-width="1"/></svg>
</body></html>
